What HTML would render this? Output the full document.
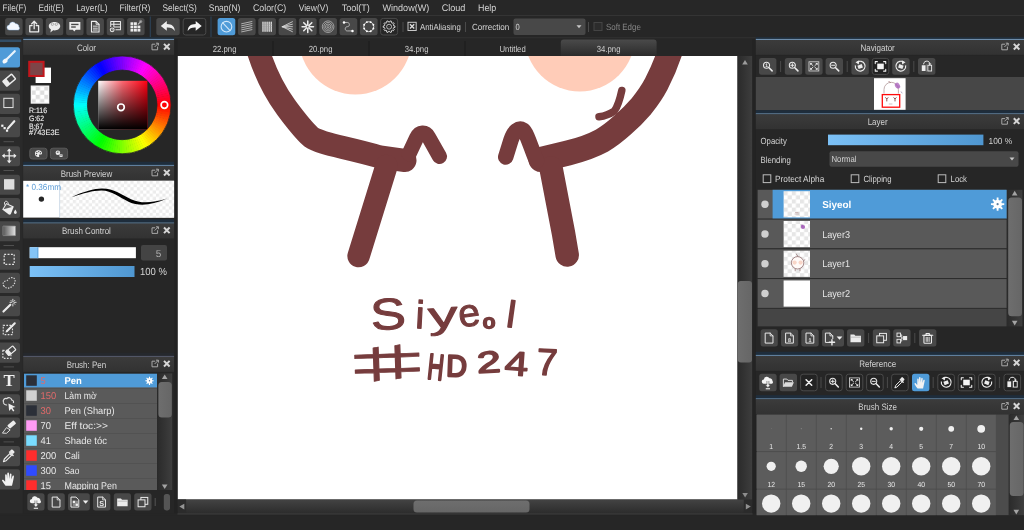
<!DOCTYPE html>
<html lang="en"><head><meta charset="utf-8"><title>MediBang Paint</title>
<style>
html,body{margin:0;padding:0;background:#262626;overflow:hidden}
svg{display:block;font-family:"Liberation Sans", sans-serif;text-rendering:geometricPrecision;will-change:transform;filter:blur(0.35px)}
</style></head><body>
<svg width="1024" height="530" viewBox="0 0 1024 530">
<defs>
<linearGradient id="gHdr" x1="0" y1="0" x2="0" y2="1"><stop offset="0" stop-color="#3b3b3b"/><stop offset="1" stop-color="#323232"/></linearGradient>
<linearGradient id="gBlue" x1="0" y1="0" x2="1" y2="0"><stop offset="0" stop-color="#7cc1f6"/><stop offset="1" stop-color="#4f97d1"/></linearGradient>
<linearGradient id="gTab" x1="0" y1="0" x2="0" y2="1"><stop offset="0" stop-color="#4a4a4a"/><stop offset="1" stop-color="#2b2b2b"/></linearGradient>
<linearGradient id="gTrackV" x1="0" y1="0" x2="1" y2="0"><stop offset="0" stop-color="#2a2a2a"/><stop offset="1" stop-color="#3e3e3e"/></linearGradient>
<linearGradient id="gThumbV" x1="0" y1="0" x2="1" y2="0"><stop offset="0" stop-color="#6e6e6e"/><stop offset="1" stop-color="#666666"/></linearGradient>
<linearGradient id="gTrackH" x1="0" y1="0" x2="0" y2="1"><stop offset="0" stop-color="#434343"/><stop offset="1" stop-color="#2c2c2c"/></linearGradient>
<linearGradient id="gThumbH" x1="0" y1="0" x2="0" y2="1"><stop offset="0" stop-color="#6e6e6e"/><stop offset="1" stop-color="#666666"/></linearGradient>
<linearGradient id="gSVw" x1="0" y1="0" x2="1" y2="0"><stop offset="0" stop-color="#ffffff"/><stop offset="0.5" stop-color="#ff6670"/><stop offset="1" stop-color="#ff0012"/></linearGradient>
<linearGradient id="gSVb" x1="0" y1="0" x2="0" y2="1"><stop offset="0" stop-color="#000" stop-opacity="0"/><stop offset="1" stop-color="#000" stop-opacity="1"/></linearGradient>
<linearGradient id="gGradTool" x1="0" y1="0" x2="1" y2="0"><stop offset="0" stop-color="#555"/><stop offset="1" stop-color="#e4e4e4"/></linearGradient>
<pattern id="chk" x="27.1" y="86.2" width="8.6" height="8.6" patternUnits="userSpaceOnUse"><rect width="8.6" height="8.6" fill="#fff"/><rect width="4.3" height="4.3" fill="#dedede"/><rect x="4.3" y="4.3" width="4.3" height="4.3" fill="#dedede"/></pattern>
<pattern id="chk2" x="60" y="180.800" width="6.400" height="6.400" patternUnits="userSpaceOnUse"><rect width="6.400" height="6.400" fill="#fff"/><rect width="3.200" height="3.200" fill="#ececec"/><rect x="3.200" y="3.200" width="3.200" height="3.200" fill="#ececec"/></pattern><pattern id="chk3" x="783.600" y="191.200" width="8.200" height="8.200" patternUnits="userSpaceOnUse"><rect width="8.200" height="8.200" fill="#fff"/><rect width="4.100" height="4.100" fill="#e6e6e6"/><rect x="4.100" y="4.100" width="4.100" height="4.100" fill="#e6e6e6"/></pattern>
<clipPath id="cvClip"><rect x="177.5" y="56" width="560" height="443.5"/></clipPath>
</defs>
<rect x="0.00" y="0.00" width="1024.00" height="530.00" fill="#272727"/>
<rect x="0.00" y="0.00" width="1024.00" height="15.20" fill="#272727"/>
<rect x="0.00" y="15.20" width="1024.00" height="0.90" fill="#383838"/>
<text transform="translate(2.50,11.20) scale(0.86,1)" font-size="9.6" fill="#d4d4d4" text-anchor="start" font-weight="normal" >File(F)</text>
<text transform="translate(38.60,11.20) scale(0.86,1)" font-size="9.6" fill="#d4d4d4" text-anchor="start" font-weight="normal" >Edit(E)</text>
<text transform="translate(76.20,11.20) scale(0.874,1)" font-size="9.6" fill="#d4d4d4" text-anchor="start" font-weight="normal" >Layer(L)</text>
<text transform="translate(119.50,11.20) scale(0.893,1)" font-size="9.6" fill="#d4d4d4" text-anchor="start" font-weight="normal" >Filter(R)</text>
<text transform="translate(162.50,11.20) scale(0.87,1)" font-size="9.6" fill="#d4d4d4" text-anchor="start" font-weight="normal" >Select(S)</text>
<text transform="translate(208.70,11.20) scale(0.888,1)" font-size="9.6" fill="#d4d4d4" text-anchor="start" font-weight="normal" >Snap(N)</text>
<text transform="translate(253.00,11.20) scale(0.916,1)" font-size="9.6" fill="#d4d4d4" text-anchor="start" font-weight="normal" >Color(C)</text>
<text transform="translate(298.70,11.20) scale(0.884,1)" font-size="9.6" fill="#d4d4d4" text-anchor="start" font-weight="normal" >View(V)</text>
<text transform="translate(341.70,11.20) scale(0.94,1)" font-size="9.6" fill="#d4d4d4" text-anchor="start" font-weight="normal" >Tool(T)</text>
<text transform="translate(382.50,11.20) scale(0.943,1)" font-size="9.6" fill="#d4d4d4" text-anchor="start" font-weight="normal" >Window(W)</text>
<text transform="translate(441.70,11.20) scale(0.944,1)" font-size="9.6" fill="#d4d4d4" text-anchor="start" font-weight="normal" >Cloud</text>
<text transform="translate(478.00,11.20) scale(0.926,1)" font-size="9.6" fill="#d4d4d4" text-anchor="start" font-weight="normal" >Help</text>
<rect x="0.00" y="16.10" width="1024.00" height="22.40" fill="#262626"/>
<rect x="0.00" y="37.40" width="1024.00" height="0.80" fill="#343434"/>
<rect x="5.10" y="18.10" width="17.50" height="17.20" fill="#484848" rx="2.5"/>
<g transform="translate(13.85,26.70) scale(0.92)"><path d="M-4.6 3.6a2.700 2.700 0 0 1 -0.300 -5.400a3.600 3.600 0 0 1 6.800 -1.300a3.100 3.100 0 0 1 3.600 3.300a2 2 0 0 1 -0.600 3.400z" fill="#f4f8ff" /><path d="M-4.6 3.6a2.700 2.700 0 0 1 -0.300 -5.400a3.600 3.600 0 0 1 6.800 -1.300a3.100 3.100 0 0 1 3.600 3.300a2 2 0 0 1 -0.600 3.400z" fill="none" stroke="#9cc4f0" stroke-width="0.9" stroke-opacity="0.55"/></g>
<rect x="25.43" y="18.10" width="17.50" height="17.20" fill="#484848" rx="2.5"/>
<g transform="translate(34.18,26.70) scale(0.92)"><path d="M-2.200 -1.200h-2.600v6.800h9.600v-6.800h-2.600" fill="none" stroke="#ececec" stroke-width="1.4" stroke-linecap="round" stroke-linejoin="round" /><path d="M0 2.200v-8m-2.800 2.800l2.800 -2.900l2.800 2.900" fill="none" stroke="#ececec" stroke-width="1.4" stroke-linecap="round" stroke-linejoin="round" /></g>
<rect x="45.76" y="18.10" width="17.50" height="17.20" fill="#484848" rx="2.5"/>
<g transform="translate(54.51,26.70) scale(0.92)"><path d="M0 -5c3.500 0 6.200 2 6.200 4.500s-2.700 4.500 -6.200 4.500c-0.500 0 -1 0 -1.500 -0.100l-3 2.300l0.600 -3.200c-1.400 -0.800 -2.300 -2.100 -2.300 -3.500c0 -2.500 2.700 -4.500 6.200 -4.500z" fill="#ececec" /><path d="M-3.200 -1.800a1.400 1.400 0 1 1 0.100 0.100M1 -1.800a1.400 1.400 0 1 1 0.100 0.100" fill="none" stroke="#8a8a8a" stroke-width="0.7" stroke-linecap="round" stroke-linejoin="round" /></g>
<rect x="66.09" y="18.10" width="17.50" height="17.20" fill="#484848" rx="2.5"/>
<g transform="translate(74.84,26.70) scale(0.92)"><path d="M-6 -5.200h12v8.400h-5l-1.600 1.900l-1.600 -1.900h-3.800z" fill="#ececec" /><rect x="-4" y="-3.2" width="8" height="1.5" fill="#484848"/><rect x="-4" y="-0.4" width="5" height="1.5" fill="#484848"/></g>
<rect x="86.42" y="18.10" width="17.50" height="17.20" fill="#484848" rx="2.5"/>
<g transform="translate(95.17,26.70) scale(0.92)"><path d="M-4 -5.800h5l3.200 3.200v8.400h-8.200z" fill="none" stroke="#ececec" stroke-width="1.2" stroke-linecap="round" stroke-linejoin="round" /><path d="M-2 -0.600h4.400M-2 1.600h4.400M-2 3.600h4.400" fill="none" stroke="#ececec" stroke-width="1" stroke-linecap="round" stroke-linejoin="round" /><path d="M1 -5.800v3.200h3.200" fill="none" stroke="#ececec" stroke-width="1" stroke-linecap="round" stroke-linejoin="round" /></g>
<rect x="106.75" y="18.10" width="17.50" height="17.20" fill="#484848" rx="2.5"/>
<g transform="translate(115.50,26.70) scale(0.92)"><path d="M-5.200 -5.600h10.600v9h-5M-5.200 -5.600v5.400M-5.200 -2.600h10.600M-1.400 0.400h6.800M-1.800 -5.600v5.400" fill="none" stroke="#ececec" stroke-width="1.1" stroke-linecap="round" stroke-linejoin="round" /><circle cx="-3.6" cy="3.4" r="2.1" fill="none" stroke="#ececec" stroke-width="1.1"/><circle cx="-3.6" cy="3.4" r="0.6" fill="#ececec"/></g>
<rect x="127.08" y="18.10" width="17.50" height="17.20" fill="#484848" rx="2.5"/>
<g transform="translate(135.83,26.70) scale(0.92)"><rect x="-5.8" y="-4.8" width="3.1" height="2.9" fill="#ececec"/><rect x="-2.0" y="-4.8" width="3.1" height="2.9" fill="#ececec"/><rect x="-5.8" y="-1.1999999999999997" width="3.1" height="2.9" fill="#ececec"/><rect x="-2.0" y="-1.1999999999999997" width="3.1" height="2.9" fill="#ececec"/><rect x="1.7999999999999998" y="-1.1999999999999997" width="3.1" height="2.9" fill="#ececec"/><rect x="-5.8" y="2.4000000000000004" width="3.1" height="2.9" fill="#ececec"/><rect x="-2.0" y="2.4000000000000004" width="3.1" height="2.9" fill="#ececec"/><rect x="1.7999999999999998" y="2.4000000000000004" width="3.1" height="2.9" fill="#ececec"/><path d="M2.600 -2.800l3 -3" fill="none" stroke="#bdbdbd" stroke-width="1.3" stroke-linecap="round" stroke-linejoin="round" /><circle cx="5.2" cy="-5.6" r="1.3" fill="none" stroke="#a8a8a8" stroke-width="0.8"/></g>
<line x1="150.30" y1="16.50" x2="150.30" y2="37.00" stroke="#2d4358" stroke-width="1.1"/>
<rect x="156.30" y="18.10" width="23.40" height="17.20" fill="#484848" rx="2.5"/>
<g transform="translate(168.00,26.70) scale(1.0)"><path d="M-7.200 -0.800l6 -4.800v2.800c5.400 0 8 2.800 8 7.200c-1.800 -2.800 -4.200 -3.800 -8 -3.600v3.200z" fill="#ececec" /></g>
<rect x="183.20" y="18.40" width="22.60" height="16.60" fill="#262626" rx="2.5" stroke="#4a4a4a" stroke-width="1"/>
<g transform="translate(194.50,26.70) scale(1.0)"><path d="M7.200 -0.800l-6 -4.800v2.800c-5.400 0 -8 2.800 -8 7.200c1.800 -2.800 4.200 -3.800 8 -3.600v3.200z" fill="#f4f4f4" /></g>
<line x1="211.00" y1="16.50" x2="211.00" y2="37.00" stroke="#2d4358" stroke-width="1.1"/>
<rect x="217.60" y="18.10" width="17.70" height="17.20" fill="#4f9bd8" rx="2.5"/>
<g transform="translate(226.45,26.70) scale(0.92)"><circle cx="0" cy="0" r="5.8" fill="none" stroke="#cfe6fa" stroke-width="1.2"/><path d="M-4 -4.200l8 8.400" fill="none" stroke="#cfe6fa" stroke-width="1.2" stroke-linecap="round" stroke-linejoin="round" /></g>
<rect x="237.93" y="18.10" width="17.70" height="17.20" fill="#484848" rx="2.5"/>
<g transform="translate(246.78,26.70) scale(0.92)"><path d="M-5.600 -3.2l11.200 -2.400" fill="none" stroke="#d6d6d6" stroke-width="0.8" stroke-linecap="round" stroke-linejoin="round" /><path d="M-5.600 -1.0l11.200 -2.400" fill="none" stroke="#d6d6d6" stroke-width="0.8" stroke-linecap="round" stroke-linejoin="round" /><path d="M-5.600 1.2l11.200 -2.400" fill="none" stroke="#d6d6d6" stroke-width="0.8" stroke-linecap="round" stroke-linejoin="round" /><path d="M-5.600 3.4l11.200 -2.400" fill="none" stroke="#d6d6d6" stroke-width="0.8" stroke-linecap="round" stroke-linejoin="round" /><path d="M-5.600 5.6l11.200 -2.400" fill="none" stroke="#d6d6d6" stroke-width="0.8" stroke-linecap="round" stroke-linejoin="round" /></g>
<rect x="258.26" y="18.10" width="17.70" height="17.20" fill="#484848" rx="2.5"/>
<g transform="translate(267.11,26.70) scale(0.92)"><path d="M-4.5 -5v10" fill="none" stroke="#e6e6e6" stroke-width="1.4" stroke-linecap="round" stroke-linejoin="round" /><path d="M-2.25 -5v10" fill="none" stroke="#e6e6e6" stroke-width="1.4" stroke-linecap="round" stroke-linejoin="round" /><path d="M0 -5v10" fill="none" stroke="#e6e6e6" stroke-width="1.4" stroke-linecap="round" stroke-linejoin="round" /><path d="M2.25 -5v10" fill="none" stroke="#e6e6e6" stroke-width="1.4" stroke-linecap="round" stroke-linejoin="round" /><path d="M4.5 -5v10" fill="none" stroke="#e6e6e6" stroke-width="1.4" stroke-linecap="round" stroke-linejoin="round" /><path d="M-5.200 -2.5h10.400" fill="none" stroke="#9a9a9a" stroke-width="0.5" stroke-linecap="round" stroke-linejoin="round" /><path d="M-5.200 0h10.400" fill="none" stroke="#9a9a9a" stroke-width="0.5" stroke-linecap="round" stroke-linejoin="round" /><path d="M-5.200 2.5h10.400" fill="none" stroke="#9a9a9a" stroke-width="0.5" stroke-linecap="round" stroke-linejoin="round" /></g>
<rect x="278.59" y="18.10" width="17.70" height="17.20" fill="#484848" rx="2.5"/>
<g transform="translate(287.44,26.70) scale(0.92)"><path d="M-5.600 0l11 -5.4" fill="none" stroke="#dcdcdc" stroke-width="0.9" stroke-linecap="round" stroke-linejoin="round" /><path d="M-5.600 0l11 -2.7" fill="none" stroke="#dcdcdc" stroke-width="0.9" stroke-linecap="round" stroke-linejoin="round" /><path d="M-5.600 0l11 0" fill="none" stroke="#dcdcdc" stroke-width="0.9" stroke-linecap="round" stroke-linejoin="round" /><path d="M-5.600 0l11 2.7" fill="none" stroke="#dcdcdc" stroke-width="0.9" stroke-linecap="round" stroke-linejoin="round" /><path d="M-5.600 0l11 5.4" fill="none" stroke="#dcdcdc" stroke-width="0.9" stroke-linecap="round" stroke-linejoin="round" /></g>
<rect x="298.92" y="18.10" width="17.70" height="17.20" fill="#484848" rx="2.5"/>
<g transform="translate(307.77,26.70) scale(0.92)"><path d="M1.70 0.00L6.20 0.00" fill="none" stroke="#ececec" stroke-width="1.65" stroke-linecap="round" stroke-linejoin="round" /><path d="M1.20 1.20L4.38 4.38" fill="none" stroke="#ececec" stroke-width="1.65" stroke-linecap="round" stroke-linejoin="round" /><path d="M0.00 1.70L0.00 6.20" fill="none" stroke="#ececec" stroke-width="1.65" stroke-linecap="round" stroke-linejoin="round" /><path d="M-1.20 1.20L-4.38 4.38" fill="none" stroke="#ececec" stroke-width="1.65" stroke-linecap="round" stroke-linejoin="round" /><path d="M-1.70 0.00L-6.20 0.00" fill="none" stroke="#ececec" stroke-width="1.65" stroke-linecap="round" stroke-linejoin="round" /><path d="M-1.20 -1.20L-4.38 -4.38" fill="none" stroke="#ececec" stroke-width="1.65" stroke-linecap="round" stroke-linejoin="round" /><path d="M-0.00 -1.70L-0.00 -6.20" fill="none" stroke="#ececec" stroke-width="1.65" stroke-linecap="round" stroke-linejoin="round" /><path d="M1.20 -1.20L4.38 -4.38" fill="none" stroke="#ececec" stroke-width="1.65" stroke-linecap="round" stroke-linejoin="round" /></g>
<rect x="319.25" y="18.10" width="17.70" height="17.20" fill="#484848" rx="2.5"/>
<g transform="translate(328.10,26.70) scale(0.92)"><circle cx="0" cy="0" r="1.2" fill="none" stroke="#cfcfcf" stroke-width="0.7"/><circle cx="0" cy="0" r="2.9" fill="none" stroke="#cfcfcf" stroke-width="0.7"/><circle cx="0" cy="0" r="4.6" fill="none" stroke="#cfcfcf" stroke-width="0.7"/><circle cx="0" cy="0" r="6.3" fill="none" stroke="#cfcfcf" stroke-width="0.7"/></g>
<rect x="339.58" y="18.10" width="17.70" height="17.20" fill="#484848" rx="2.5"/>
<g transform="translate(348.43,26.70) scale(0.92)"><path d="M-4.600 -4.600h3.400c3 0 3 4.600 0 4.600c-3 0 -3 4.600 0 4.600h5" fill="none" stroke="#c4c4c4" stroke-width="0.95" stroke-linecap="round" stroke-linejoin="round" /><circle cx="-4.8" cy="-4.6" r="1.35" fill="#fff"/><circle cx="4.4" cy="4.6" r="1.35" fill="#fff"/></g>
<rect x="359.91" y="18.10" width="17.70" height="17.20" fill="#484848" rx="2.5"/>
<g transform="translate(368.76,26.70) scale(0.92)"><circle cx="0" cy="0" r="5.4" fill="none" stroke="#d8d8d8" stroke-width="1.05"/><circle cx="4.99" cy="2.05" r="1.05" fill="#ffffff"/><circle cx="2.08" cy="4.98" r="1.05" fill="#ffffff"/><circle cx="-2.05" cy="4.99" r="1.05" fill="#ffffff"/><circle cx="-4.98" cy="2.08" r="1.05" fill="#ffffff"/><circle cx="-4.99" cy="-2.05" r="1.05" fill="#ffffff"/><circle cx="-2.08" cy="-4.98" r="1.05" fill="#ffffff"/><circle cx="2.05" cy="-4.99" r="1.05" fill="#ffffff"/><circle cx="4.98" cy="-2.08" r="1.05" fill="#ffffff"/></g>
<rect x="380.64" y="18.40" width="17.00" height="16.60" fill="#262626" rx="2.5" stroke="#4a4a4a" stroke-width="1"/>
<g transform="translate(389.09,26.70) scale(0.88)"><polygon points="5.19,-1.05 6.65,-0.80 6.65,0.80 5.19,1.05 4.82,2.20 5.85,3.26 4.91,4.56 3.58,3.91 2.61,4.61 2.82,6.08 1.29,6.57 0.60,5.27 -0.60,5.27 -1.29,6.57 -2.82,6.08 -2.61,4.61 -3.58,3.91 -4.91,4.56 -5.85,3.26 -4.82,2.20 -5.19,1.05 -6.65,0.80 -6.65,-0.80 -5.19,-1.05 -4.82,-2.20 -5.85,-3.26 -4.91,-4.56 -3.58,-3.91 -2.61,-4.61 -2.82,-6.08 -1.29,-6.57 -0.60,-5.27 0.60,-5.27 1.29,-6.57 2.82,-6.08 2.61,-4.61 3.58,-3.91 4.91,-4.56 5.85,-3.26 4.82,-2.20" fill="none" stroke="#dcdcdc" stroke-width="1.1" stroke-linejoin="round"/><circle cx="0" cy="0" r="2.8" fill="none" stroke="#d0d0d0" stroke-width="1"/><circle cx="0" cy="0" r="0.9" fill="#555"/></g>
<line x1="403.00" y1="22.00" x2="403.00" y2="32.00" stroke="#4a4a4a" stroke-width="1"/>
<rect x="408.00" y="22.30" width="8.20" height="8.20" fill="#2a2a2a" stroke="#c8c8c8" stroke-width="1"/>
<path d="M410 24.3l4.2 4.2m0-4.2l-4.2 4.2" stroke="#e0e0e0" stroke-width="1.3" fill="none"/>
<text transform="translate(420.00,30.00) scale(0.886,1)" font-size="8.8" fill="#d4d4d4" text-anchor="start" font-weight="normal" >AntiAliasing</text>
<line x1="465.50" y1="22.00" x2="465.50" y2="32.00" stroke="#4a4a4a" stroke-width="1"/>
<text transform="translate(472.00,30.00) scale(0.915,1)" font-size="8.8" fill="#d4d4d4" text-anchor="start" font-weight="normal" >Correction</text>
<rect x="513.50" y="18.50" width="72.00" height="16.50" fill="#484848" rx="2"/>
<text transform="translate(515.50,30.00) scale(0.86,1)" font-size="8.8" fill="#d4d4d4" text-anchor="start" font-weight="normal" >0</text>
<path d="M576.5 25.3h5l-2.5 3z" fill="#c8c8c8"/>
<line x1="588.50" y1="22.00" x2="588.50" y2="32.00" stroke="#4a4a4a" stroke-width="1"/>
<rect x="594.00" y="22.50" width="8.00" height="8.00" fill="#2c2c2c" stroke="#444" stroke-width="1"/>
<text transform="translate(606.00,30.00) scale(0.88,1)" font-size="9" fill="#858585" text-anchor="start" font-weight="normal" >Soft Edge</text>
<rect x="0.00" y="38.50" width="22.50" height="476.00" fill="#2a2a2a"/>
<rect x="0.00" y="39.50" width="21.20" height="2.50" fill="#324d66"/>
<rect x="-2.00" y="47.22" width="22.00" height="20.20" fill="#4f9bd8" rx="2.5"/>
<g transform="translate(9.20,56.92) scale(0.96)"><path d="M-2.400 2.200l8.200 -8.200" fill="none" stroke="#e8f3fc" stroke-width="2.3" stroke-linecap="round" stroke-linejoin="round" /><ellipse cx="-4.300" cy="4.300" rx="2.900" ry="2.200" transform="rotate(-35 -4.300 4.300)" fill="#f4f8fc"/></g>
<rect x="-2.00" y="70.46" width="22.00" height="20.20" fill="#484848" rx="2.5"/>
<g transform="translate(9.20,80.16) scale(0.96)"><g transform="rotate(-40)"><rect x="-6" y="-3.3" width="12" height="6.6" fill="none" rx="0.6" stroke="#ececec" stroke-width="1.5"/><rect x="-6" y="-3.3" width="4.6" height="6.6" fill="#ececec"/></g></g>
<rect x="-2.00" y="93.70" width="22.00" height="20.20" fill="#484848" rx="2.5"/>
<g transform="translate(9.20,103.40) scale(0.96)"><rect x="-5.6" y="-5.3" width="9.6" height="9.6" fill="none" stroke="#dcdcdc" stroke-width="1.1"/></g>
<rect x="-2.00" y="116.94" width="22.00" height="20.20" fill="#484848" rx="2.5"/>
<g transform="translate(9.20,126.64) scale(0.96)"><path d="M-1.300 1.800l6.600 -7.400" fill="none" stroke="#ececec" stroke-width="2.3" stroke-linecap="round" stroke-linejoin="round" /><rect x="-8.3" y="-2.1" width="2.3" height="2.3" fill="#f4f4f4"/><rect x="-5.9" y="0.4" width="2.3" height="2.3" fill="#f4f4f4"/><rect x="-3.4" y="3" width="2.3" height="2.3" fill="#f4f4f4"/></g>
<rect x="-2.00" y="146.17" width="22.00" height="20.20" fill="#484848" rx="2.5"/>
<g transform="translate(9.20,155.87) scale(0.96)"><path d="M0 -6v12M-6 0h12" fill="none" stroke="#ececec" stroke-width="1.3" stroke-linecap="round" stroke-linejoin="round" /><path d="M0 -7.600l2.500 2.900h-5zM0 7.600l2.500 -2.900h-5zM-7.600 0l2.900 -2.500v5zM7.600 0l-2.900 -2.500v5z" fill="#ececec" /></g>
<rect x="-2.00" y="174.66" width="22.00" height="20.20" fill="#484848" rx="2.5"/>
<g transform="translate(9.20,184.36) scale(0.96)"><rect x="-5.4" y="-5.4" width="10.8" height="10.8" fill="#dedede"/></g>
<rect x="-2.00" y="197.89" width="22.00" height="20.20" fill="#484848" rx="2.5"/>
<g transform="translate(9.20,207.59) scale(0.96)"><g transform="translate(-0.800,0) rotate(-14) scale(1.06)"><path d="M-6.400 0.400l5.400 -5.400l6.400 5.200l-4.400 6.200c-0.500 0.700 -1.500 0.900 -2.300 0.300z" fill="#ececec" /><path d="M-5 0.400l4 -4l4.600 3.800z" fill="#5a5a5a" /><path d="M-2.600 -2.800c-1.200 -3 1.200 -5 2.800 -3.200c0.800 0.900 0.800 2 0.600 3" fill="none" stroke="#dcdcdc" stroke-width="0.9" stroke-linecap="round" stroke-linejoin="round" /></g><path d="M6.400 2c0.900 1.400 1.500 2.400 1.500 3.200a1.500 1.500 0 0 1 -3 0c0 -0.800 0.600 -1.800 1.500 -3.200z" fill="#ececec" /></g>
<rect x="-2.00" y="221.13" width="22.00" height="20.20" fill="#484848" rx="2.5"/>
<g transform="translate(9.20,230.83) scale(0.96)"><rect x="-6.6" y="-5" width="13.2" height="10" fill="url(#gGradTool)" rx="0.5" stroke="#8a8a8a" stroke-width="0.7"/></g>
<rect x="-2.00" y="249.62" width="22.00" height="20.20" fill="#484848" rx="2.5"/>
<g transform="translate(9.20,259.32) scale(0.96)"><rect x="-5.2" y="-5.2" width="10.4" height="10.4" fill="none" stroke="#e0e0e0" stroke-width="1.3" stroke-dasharray="2 1.500"/></g>
<rect x="-2.00" y="272.85" width="22.00" height="20.20" fill="#484848" rx="2.5"/>
<g transform="translate(9.20,282.55) scale(0.96)"><path d="M-5.400 3.800c-2.200 -2.600 -0.400 -5.200 2.200 -5.600c2 -0.300 2.400 -2.600 4.800 -3.200c3.200 -0.800 5.200 1.800 4.400 4.600c-1 3.800 -4.600 6.400 -8 6.200c-1.600 -0.100 -2.600 -0.900 -3.400 -2z" fill="none" stroke="#dcdcdc" stroke-width="1.200" stroke-dasharray="1.400 1.300"/></g>
<rect x="-2.00" y="296.09" width="22.00" height="20.20" fill="#484848" rx="2.5"/>
<g transform="translate(9.20,305.79) scale(0.96)"><path d="M-6 6l7.200 -7.200" fill="none" stroke="#ececec" stroke-width="2.2" stroke-linecap="round" stroke-linejoin="round" /><path d="M3.800 -6.800v2.200M3.800 -1.800v2M0.800 -3.600h2M5 -3.600h2.200M1.800 -5.600l1 1M5.800 -5.600l-1 1M5.800 -1.600l-1 -1" fill="none" stroke="#f0f0f0" stroke-width="0.9" stroke-linecap="round" stroke-linejoin="round" /></g>
<rect x="-2.00" y="319.33" width="22.00" height="20.20" fill="#484848" rx="2.5"/>
<g transform="translate(9.20,329.03) scale(0.96)"><rect x="-6.2" y="-3.8" width="9.6" height="9.6" fill="none" stroke="#dcdcdc" stroke-width="1.2" stroke-dasharray="1.800 1.400"/><path d="M-2.200 2l8 -8" fill="none" stroke="#ececec" stroke-width="2.2" stroke-linecap="round" stroke-linejoin="round" /><path d="M-3.800 3.600l0.600 -2.200l1.600 1.600z" fill="#ececec" /></g>
<rect x="-2.00" y="342.57" width="22.00" height="20.20" fill="#484848" rx="2.5"/>
<g transform="translate(9.20,352.27) scale(0.96)"><rect x="-6.6" y="-2" width="8.4" height="8.4" fill="none" stroke="#dcdcdc" stroke-width="1.2" stroke-dasharray="1.800 1.400"/><g transform="translate(1.600,-1.600) rotate(-40) scale(0.8)"><rect x="-6" y="-3.3" width="12" height="6.6" fill="#484848" rx="0.6" stroke="#ececec" stroke-width="1.5"/><rect x="-6" y="-3.3" width="4.6" height="6.6" fill="#ececec"/></g></g>
<rect x="-2.00" y="371.05" width="22.00" height="20.20" fill="#484848" rx="2.5"/>
<g transform="translate(9.20,380.75) scale(0.96)"><text x="0" y="5.800" font-family="&quot;Liberation Serif&quot;, serif" font-weight="bold" font-size="17.500" text-anchor="middle" fill="#f0f0f0">T</text></g>
<rect x="-2.00" y="394.29" width="22.00" height="20.20" fill="#484848" rx="2.5"/>
<g transform="translate(9.20,403.99) scale(0.96)"><path d="M-6 -1.800c-1 -2.600 1.400 -4.600 3.600 -3.800c1.400 -1.600 4.600 -1.200 5 1.400c1.800 0.200 2.400 2 1.600 3.200" fill="none" stroke="#e0e0e0" stroke-width="1.200"/><path d="M-6 -1.800c0.200 2 1.800 3 3.800 2.800" fill="none" stroke="#e0e0e0" stroke-width="1.200"/><path d="M-0.800 -0.400l7.400 3.600l-3.200 0.800l2 3l-1.300 0.900l-2 -3l-2.200 2.300z" fill="#ececec" /></g>
<rect x="-2.00" y="417.53" width="22.00" height="20.20" fill="#484848" rx="2.5"/>
<g transform="translate(9.20,427.23) scale(0.96)"><path d="M-7 5.600l3.800 -5.200l4.600 2.600l-3.600 3.400z" fill="none" /><path d="M-6.800 5.800l4 -5.400l3.800 2.400l-3.400 3.200z" fill="none" stroke="#e0e0e0" stroke-width="1" stroke-linecap="round" stroke-linejoin="round" /><g transform="rotate(-40)"><rect x="-0.6" y="-2.7" width="8.8" height="4.4" fill="#ececec" rx="1"/></g></g>
<rect x="-2.00" y="446.01" width="22.00" height="20.20" fill="#484848" rx="2.5"/>
<g transform="translate(9.20,455.71) scale(0.96)"><path d="M-6 6.200l1 -2.800l5.600 -5.600l1.800 1.800l-5.600 5.600z" fill="none" stroke="#ececec" stroke-width="1.2" stroke-linecap="round" stroke-linejoin="round" /><path d="M0.400 -3.800l3.600 3.600" fill="none" stroke="#ececec" stroke-width="1.6" stroke-linecap="round" stroke-linejoin="round" /><g transform="rotate(-45 3.600 -3.600)"><rect x="2" y="-6.6" width="3.4" height="4.6" fill="#ececec" rx="1.2"/></g></g>
<rect x="-2.00" y="469.25" width="22.00" height="20.20" fill="#484848" rx="2.5"/>
<g transform="translate(9.20,478.95) scale(0.96)"><path d="M-3.800 7.200c-1.400 -1.600 -2.600 -3.400 -3.600 -5.200c-0.500 -0.900 0.700 -1.800 1.500 -0.900l1.700 1.900v-7.200c0 -1.100 1.600 -1.100 1.700 0l0.300 4.200l0.200 -5.700c0 -1.200 1.700 -1.200 1.800 0l0.200 5.700l0.700 -5c0.100 -1.100 1.700 -1 1.700 0.200l-0.300 5.400l1.200 -3.500c0.400 -1 1.800 -0.600 1.600 0.500c-0.500 3 -1 5.400 -2 9.600z" fill="#f2f2f2" /></g>
<line x1="3.50" y1="141.70" x2="14.00" y2="141.70" stroke="#505050" stroke-width="1"/>
<line x1="3.50" y1="170.50" x2="14.00" y2="170.50" stroke="#505050" stroke-width="1"/>
<line x1="3.50" y1="245.50" x2="14.00" y2="245.50" stroke="#505050" stroke-width="1"/>
<line x1="3.50" y1="366.90" x2="14.00" y2="366.90" stroke="#505050" stroke-width="1"/>
<line x1="3.50" y1="441.90" x2="14.00" y2="441.90" stroke="#505050" stroke-width="1"/>
<rect x="23.20" y="39.00" width="151.00" height="475.00" fill="#262626"/>
<rect x="23.20" y="37.20" width="151.00" height="1.80" fill="#1e2d3c"/>
<rect x="23.20" y="38.90" width="151.00" height="1.05" fill="#7393b2"/>
<rect x="23.20" y="40.00" width="151.00" height="14.80" fill="url(#gHdr)"/>
<text transform="translate(86.45,50.80) scale(0.86,1)" font-size="9.3" fill="#d2d2d2" text-anchor="middle" font-weight="normal" >Color</text>
<path d="M155.2 44.2h-3.200v5.600h5.600v-3.200" stroke="#a8a8a8" stroke-width="1" fill="none"/>
<path d="M154.6 47.0l3.800-3.800m-2.400 0h2.400v2.400" stroke="#a8a8a8" stroke-width="1" fill="none"/>
<path d="M164.0 43.9l5.600 5.600m0-5.600l-5.600 5.600" stroke="#d6d6d6" stroke-width="2" fill="none"/>
<rect x="35.60" y="67.60" width="15.40" height="15.40" fill="#ffffff"/>
<rect x="28.20" y="60.80" width="16.40" height="16.20" fill="#c2161c"/>
<rect x="30.20" y="62.80" width="12.40" height="12.20" fill="#7d4548"/>
<rect x="31.40" y="86.20" width="17.20" height="16.80" fill="url(#chk)"/>
<rect x="31.40" y="86.20" width="17.20" height="16.80" fill="none" stroke="#f4f4f4" stroke-width="1.4"/>
<text transform="translate(29.00,112.80) scale(0.89,1)" font-size="7.8" fill="#eeeeee" text-anchor="start" font-weight="normal" stroke="#eeeeee" stroke-width="0.12">R:116</text>
<text transform="translate(29.00,121.00) scale(0.89,1)" font-size="7.8" fill="#eeeeee" text-anchor="start" font-weight="normal" stroke="#eeeeee" stroke-width="0.12">G:62</text>
<text transform="translate(29.00,129.00) scale(0.89,1)" font-size="7.8" fill="#eeeeee" text-anchor="start" font-weight="normal" stroke="#eeeeee" stroke-width="0.12">B:67</text>
<text transform="translate(29.00,134.80) scale(0.95,1)" font-size="7.8" fill="#eeeeee" text-anchor="start" font-weight="normal" stroke="#eeeeee" stroke-width="0.12">#743E3E</text>
<polygon points="171.10,104.90 171.00,108.10 156.93,107.18 157.00,104.90" fill="hsl(1.5,100%,50%)"/>
<polygon points="171.03,107.46 170.76,110.65 156.76,108.99 156.95,106.72" fill="hsl(4.5,100%,50%)"/>
<polygon points="170.83,110.01 170.39,113.18 156.50,110.79 156.81,108.54" fill="hsl(7.5,100%,50%)"/>
<polygon points="170.50,112.55 169.89,115.69 156.14,112.58 156.57,110.34" fill="hsl(10.5,100%,50%)"/>
<polygon points="170.03,115.07 169.26,118.17 155.69,114.35 156.24,112.14" fill="hsl(13.5,100%,50%)"/>
<polygon points="169.43,117.56 168.50,120.62 155.15,116.09 155.81,113.91" fill="hsl(16.5,100%,50%)"/>
<polygon points="168.71,120.01 167.62,123.02 154.52,117.80 155.30,115.65" fill="hsl(19.5,100%,50%)"/>
<polygon points="167.85,122.42 166.61,125.37 153.80,119.47 154.69,117.37" fill="hsl(22.5,100%,50%)"/>
<polygon points="166.87,124.79 165.48,127.67 153.00,121.10 153.99,119.05" fill="hsl(25.5,100%,50%)"/>
<polygon points="165.77,127.10 164.22,129.90 152.11,122.69 153.21,120.70" fill="hsl(28.5,100%,50%)"/>
<polygon points="164.55,129.35 162.86,132.07 151.14,124.23 152.34,122.30" fill="hsl(31.5,100%,50%)"/>
<polygon points="163.21,131.53 161.38,134.16 150.08,125.72 151.39,123.85" fill="hsl(34.5,100%,50%)"/>
<polygon points="161.76,133.64 159.80,136.17 148.96,127.15 150.35,125.35" fill="hsl(37.5,100%,50%)"/>
<polygon points="160.20,135.67 158.11,138.09 147.75,128.52 149.24,126.80" fill="hsl(40.5,100%,50%)"/>
<polygon points="158.54,137.62 156.32,139.93 146.48,129.83 148.06,128.19" fill="hsl(43.5,100%,50%)"/>
<polygon points="156.78,139.48 154.44,141.66 145.15,131.06 146.81,129.51" fill="hsl(46.5,100%,50%)"/>
<polygon points="154.92,141.24 152.47,143.30 143.74,132.23 145.49,130.76" fill="hsl(49.5,100%,50%)"/>
<polygon points="152.97,142.90 150.42,144.83 142.28,133.32 144.10,131.94" fill="hsl(52.5,100%,50%)"/>
<polygon points="150.94,144.46 148.29,146.26 140.77,134.33 142.65,133.05" fill="hsl(55.5,100%,50%)"/>
<polygon points="148.83,145.91 146.09,147.57 139.20,135.26 141.15,134.09" fill="hsl(58.5,100%,50%)"/>
<polygon points="146.65,147.25 143.83,148.76 137.59,136.11 139.60,135.04" fill="hsl(61.5,100%,50%)"/>
<polygon points="144.40,148.47 141.50,149.83 135.94,136.87 138.00,135.91" fill="hsl(64.5,100%,50%)"/>
<polygon points="142.09,149.57 139.13,150.78 134.24,137.55 136.35,136.69" fill="hsl(67.5,100%,50%)"/>
<polygon points="139.72,150.55 136.70,151.60 132.52,138.13 134.67,137.39" fill="hsl(70.5,100%,50%)"/>
<polygon points="137.31,151.41 134.24,152.30 130.77,138.63 132.95,138.00" fill="hsl(73.5,100%,50%)"/>
<polygon points="134.86,152.13 131.74,152.86 128.99,139.03 131.21,138.51" fill="hsl(76.5,100%,50%)"/>
<polygon points="132.37,152.73 129.22,153.29 127.19,139.34 129.44,138.94" fill="hsl(79.5,100%,50%)"/>
<polygon points="129.85,153.20 126.67,153.59 125.38,139.55 127.64,139.27" fill="hsl(82.5,100%,50%)"/>
<polygon points="127.31,153.53 124.12,153.76 123.57,139.67 125.84,139.51" fill="hsl(85.5,100%,50%)"/>
<polygon points="124.76,153.73 121.56,153.80 121.74,139.70 124.02,139.65" fill="hsl(88.5,100%,50%)"/>
<polygon points="122.20,153.80 119.00,153.70 119.92,139.63 122.20,139.70" fill="hsl(91.5,100%,50%)"/>
<polygon points="119.64,153.73 116.45,153.46 118.11,139.46 120.38,139.65" fill="hsl(94.5,100%,50%)"/>
<polygon points="117.09,153.53 113.92,153.09 116.31,139.20 118.56,139.51" fill="hsl(97.5,100%,50%)"/>
<polygon points="114.55,153.20 111.41,152.59 114.52,138.84 116.76,139.27" fill="hsl(100.5,100%,50%)"/>
<polygon points="112.03,152.73 108.93,151.96 112.75,138.39 114.96,138.94" fill="hsl(103.5,100%,50%)"/>
<polygon points="109.54,152.13 106.48,151.20 111.01,137.85 113.19,138.51" fill="hsl(106.5,100%,50%)"/>
<polygon points="107.09,151.41 104.08,150.32 109.30,137.22 111.45,138.00" fill="hsl(109.5,100%,50%)"/>
<polygon points="104.68,150.55 101.73,149.31 107.63,136.50 109.73,137.39" fill="hsl(112.5,100%,50%)"/>
<polygon points="102.31,149.57 99.43,148.18 106.00,135.70 108.05,136.69" fill="hsl(115.5,100%,50%)"/>
<polygon points="100.00,148.47 97.20,146.92 104.41,134.81 106.40,135.91" fill="hsl(118.5,100%,50%)"/>
<polygon points="97.75,147.25 95.03,145.56 102.87,133.84 104.80,135.04" fill="hsl(121.5,100%,50%)"/>
<polygon points="95.57,145.91 92.94,144.08 101.38,132.78 103.25,134.09" fill="hsl(124.5,100%,50%)"/>
<polygon points="93.46,144.46 90.93,142.50 99.95,131.66 101.75,133.05" fill="hsl(127.5,100%,50%)"/>
<polygon points="91.43,142.90 89.01,140.81 98.58,130.45 100.30,131.94" fill="hsl(130.5,100%,50%)"/>
<polygon points="89.48,141.24 87.17,139.02 97.27,129.18 98.91,130.76" fill="hsl(133.5,100%,50%)"/>
<polygon points="87.62,139.48 85.44,137.14 96.04,127.85 97.59,129.51" fill="hsl(136.5,100%,50%)"/>
<polygon points="85.86,137.62 83.80,135.17 94.87,126.44 96.34,128.19" fill="hsl(139.5,100%,50%)"/>
<polygon points="84.20,135.67 82.27,133.12 93.78,124.98 95.16,126.80" fill="hsl(142.5,100%,50%)"/>
<polygon points="82.64,133.64 80.84,130.99 92.77,123.47 94.05,125.35" fill="hsl(145.5,100%,50%)"/>
<polygon points="81.19,131.53 79.53,128.79 91.84,121.90 93.01,123.85" fill="hsl(148.5,100%,50%)"/>
<polygon points="79.85,129.35 78.34,126.53 90.99,120.29 92.06,122.30" fill="hsl(151.5,100%,50%)"/>
<polygon points="78.63,127.10 77.27,124.20 90.23,118.64 91.19,120.70" fill="hsl(154.5,100%,50%)"/>
<polygon points="77.53,124.79 76.32,121.83 89.55,116.94 90.41,119.05" fill="hsl(157.5,100%,50%)"/>
<polygon points="76.55,122.42 75.50,119.40 88.97,115.22 89.71,117.37" fill="hsl(160.5,100%,50%)"/>
<polygon points="75.69,120.01 74.80,116.94 88.47,113.47 89.10,115.65" fill="hsl(163.5,100%,50%)"/>
<polygon points="74.97,117.56 74.24,114.44 88.07,111.69 88.59,113.91" fill="hsl(166.5,100%,50%)"/>
<polygon points="74.37,115.07 73.81,111.92 87.76,109.89 88.16,112.14" fill="hsl(169.5,100%,50%)"/>
<polygon points="73.90,112.55 73.51,109.37 87.55,108.08 87.83,110.34" fill="hsl(172.5,100%,50%)"/>
<polygon points="73.57,110.01 73.34,106.82 87.43,106.27 87.59,108.54" fill="hsl(175.5,100%,50%)"/>
<polygon points="73.37,107.46 73.30,104.26 87.40,104.44 87.45,106.72" fill="hsl(178.5,100%,50%)"/>
<polygon points="73.30,104.90 73.40,101.70 87.47,102.62 87.40,104.90" fill="hsl(181.5,100%,50%)"/>
<polygon points="73.37,102.34 73.64,99.15 87.64,100.81 87.45,103.08" fill="hsl(184.5,100%,50%)"/>
<polygon points="73.57,99.79 74.01,96.62 87.90,99.01 87.59,101.26" fill="hsl(187.5,100%,50%)"/>
<polygon points="73.90,97.25 74.51,94.11 88.26,97.22 87.83,99.46" fill="hsl(190.5,100%,50%)"/>
<polygon points="74.37,94.73 75.14,91.63 88.71,95.45 88.16,97.66" fill="hsl(193.5,100%,50%)"/>
<polygon points="74.97,92.24 75.90,89.18 89.25,93.71 88.59,95.89" fill="hsl(196.5,100%,50%)"/>
<polygon points="75.69,89.79 76.78,86.78 89.88,92.00 89.10,94.15" fill="hsl(199.5,100%,50%)"/>
<polygon points="76.55,87.38 77.79,84.43 90.60,90.33 89.71,92.43" fill="hsl(202.5,100%,50%)"/>
<polygon points="77.53,85.01 78.92,82.13 91.40,88.70 90.41,90.75" fill="hsl(205.5,100%,50%)"/>
<polygon points="78.63,82.70 80.18,79.90 92.29,87.11 91.19,89.10" fill="hsl(208.5,100%,50%)"/>
<polygon points="79.85,80.45 81.54,77.73 93.26,85.57 92.06,87.50" fill="hsl(211.5,100%,50%)"/>
<polygon points="81.19,78.27 83.02,75.64 94.32,84.08 93.01,85.95" fill="hsl(214.5,100%,50%)"/>
<polygon points="82.64,76.16 84.60,73.63 95.44,82.65 94.05,84.45" fill="hsl(217.5,100%,50%)"/>
<polygon points="84.20,74.13 86.29,71.71 96.65,81.28 95.16,83.00" fill="hsl(220.5,100%,50%)"/>
<polygon points="85.86,72.18 88.08,69.87 97.92,79.97 96.34,81.61" fill="hsl(223.5,100%,50%)"/>
<polygon points="87.62,70.32 89.96,68.14 99.25,78.74 97.59,80.29" fill="hsl(226.5,100%,50%)"/>
<polygon points="89.48,68.56 91.93,66.50 100.66,77.57 98.91,79.04" fill="hsl(229.5,100%,50%)"/>
<polygon points="91.43,66.90 93.98,64.97 102.12,76.48 100.30,77.86" fill="hsl(232.5,100%,50%)"/>
<polygon points="93.46,65.34 96.11,63.54 103.63,75.47 101.75,76.75" fill="hsl(235.5,100%,50%)"/>
<polygon points="95.57,63.89 98.31,62.23 105.20,74.54 103.25,75.71" fill="hsl(238.5,100%,50%)"/>
<polygon points="97.75,62.55 100.57,61.04 106.81,73.69 104.80,74.76" fill="hsl(241.5,100%,50%)"/>
<polygon points="100.00,61.33 102.90,59.97 108.46,72.93 106.40,73.89" fill="hsl(244.5,100%,50%)"/>
<polygon points="102.31,60.23 105.27,59.02 110.16,72.25 108.05,73.11" fill="hsl(247.5,100%,50%)"/>
<polygon points="104.68,59.25 107.70,58.20 111.88,71.67 109.73,72.41" fill="hsl(250.5,100%,50%)"/>
<polygon points="107.09,58.39 110.16,57.50 113.63,71.17 111.45,71.80" fill="hsl(253.5,100%,50%)"/>
<polygon points="109.54,57.67 112.66,56.94 115.41,70.77 113.19,71.29" fill="hsl(256.5,100%,50%)"/>
<polygon points="112.03,57.07 115.18,56.51 117.21,70.46 114.96,70.86" fill="hsl(259.5,100%,50%)"/>
<polygon points="114.55,56.60 117.73,56.21 119.02,70.25 116.76,70.53" fill="hsl(262.5,100%,50%)"/>
<polygon points="117.09,56.27 120.28,56.04 120.83,70.13 118.56,70.29" fill="hsl(265.5,100%,50%)"/>
<polygon points="119.64,56.07 122.84,56.00 122.66,70.10 120.38,70.15" fill="hsl(268.5,100%,50%)"/>
<polygon points="122.20,56.00 125.40,56.10 124.48,70.17 122.20,70.10" fill="hsl(271.5,100%,50%)"/>
<polygon points="124.76,56.07 127.95,56.34 126.29,70.34 124.02,70.15" fill="hsl(274.5,100%,50%)"/>
<polygon points="127.31,56.27 130.48,56.71 128.09,70.60 125.84,70.29" fill="hsl(277.5,100%,50%)"/>
<polygon points="129.85,56.60 132.99,57.21 129.88,70.96 127.64,70.53" fill="hsl(280.5,100%,50%)"/>
<polygon points="132.37,57.07 135.47,57.84 131.65,71.41 129.44,70.86" fill="hsl(283.5,100%,50%)"/>
<polygon points="134.86,57.67 137.92,58.60 133.39,71.95 131.21,71.29" fill="hsl(286.5,100%,50%)"/>
<polygon points="137.31,58.39 140.32,59.48 135.10,72.58 132.95,71.80" fill="hsl(289.5,100%,50%)"/>
<polygon points="139.72,59.25 142.67,60.49 136.77,73.30 134.67,72.41" fill="hsl(292.5,100%,50%)"/>
<polygon points="142.09,60.23 144.97,61.62 138.40,74.10 136.35,73.11" fill="hsl(295.5,100%,50%)"/>
<polygon points="144.40,61.33 147.20,62.88 139.99,74.99 138.00,73.89" fill="hsl(298.5,100%,50%)"/>
<polygon points="146.65,62.55 149.37,64.24 141.53,75.96 139.60,74.76" fill="hsl(301.5,100%,50%)"/>
<polygon points="148.83,63.89 151.46,65.72 143.02,77.02 141.15,75.71" fill="hsl(304.5,100%,50%)"/>
<polygon points="150.94,65.34 153.47,67.30 144.45,78.14 142.65,76.75" fill="hsl(307.5,100%,50%)"/>
<polygon points="152.97,66.90 155.39,68.99 145.82,79.35 144.10,77.86" fill="hsl(310.5,100%,50%)"/>
<polygon points="154.92,68.56 157.23,70.78 147.13,80.62 145.49,79.04" fill="hsl(313.5,100%,50%)"/>
<polygon points="156.78,70.32 158.96,72.66 148.36,81.95 146.81,80.29" fill="hsl(316.5,100%,50%)"/>
<polygon points="158.54,72.18 160.60,74.63 149.53,83.36 148.06,81.61" fill="hsl(319.5,100%,50%)"/>
<polygon points="160.20,74.13 162.13,76.68 150.62,84.82 149.24,83.00" fill="hsl(322.5,100%,50%)"/>
<polygon points="161.76,76.16 163.56,78.81 151.63,86.33 150.35,84.45" fill="hsl(325.5,100%,50%)"/>
<polygon points="163.21,78.27 164.87,81.01 152.56,87.90 151.39,85.95" fill="hsl(328.5,100%,50%)"/>
<polygon points="164.55,80.45 166.06,83.27 153.41,89.51 152.34,87.50" fill="hsl(331.5,100%,50%)"/>
<polygon points="165.77,82.70 167.13,85.60 154.17,91.16 153.21,89.10" fill="hsl(334.5,100%,50%)"/>
<polygon points="166.87,85.01 168.08,87.97 154.85,92.86 153.99,90.75" fill="hsl(337.5,100%,50%)"/>
<polygon points="167.85,87.38 168.90,90.40 155.43,94.58 154.69,92.43" fill="hsl(340.5,100%,50%)"/>
<polygon points="168.71,89.79 169.60,92.86 155.93,96.33 155.30,94.15" fill="hsl(343.5,100%,50%)"/>
<polygon points="169.43,92.24 170.16,95.36 156.33,98.11 155.81,95.89" fill="hsl(346.5,100%,50%)"/>
<polygon points="170.03,94.73 170.59,97.88 156.64,99.91 156.24,97.66" fill="hsl(349.5,100%,50%)"/>
<polygon points="170.50,97.25 170.89,100.43 156.85,101.72 156.57,99.46" fill="hsl(352.5,100%,50%)"/>
<polygon points="170.83,99.79 171.06,102.98 156.97,103.53 156.81,101.26" fill="hsl(355.5,100%,50%)"/>
<polygon points="171.03,102.34 171.10,105.54 157.00,105.36 156.95,103.08" fill="hsl(358.5,100%,50%)"/>
<circle cx="122.2" cy="104.9" r="41.849999999999994" fill="none" stroke="#262626" stroke-opacity="0" />
<circle cx="122.2" cy="104.9" r="48.9" fill="none" stroke="#262626" stroke-width="0.8"/>
<circle cx="122.2" cy="104.9" r="34.8" fill="none" stroke="#262626" stroke-width="0.8"/>
<rect x="98.20" y="80.80" width="49.20" height="48.40" fill="url(#gSVw)"/>
<rect x="98.20" y="80.80" width="49.20" height="48.40" fill="url(#gSVb)"/>
<circle cx="121" cy="107.3" r="3.3" fill="none" stroke="#fff" stroke-width="1.7"/>
<circle cx="164.4" cy="105" r="3.3" fill="none" stroke="#fff" stroke-width="1.7"/>
<rect x="29.80" y="148.20" width="17.20" height="10.80" fill="#484848" rx="2.5" stroke="#5a5a5a" stroke-width="1"/>
<g transform="translate(38.40,153.60) scale(0.55)"><path d="M0 -6a6.500 6 0 1 0 0.600 12c1.600 -0.100 1 -1.800 0.600 -2.600c-0.500 -1.200 0.600 -2 1.800 -1.800c2 0.300 3.600 -0.400 3.600 -2.200c0 -3 -3 -5.400 -6.600 -5.400z" fill="#ececec" /><circle cx="-2.8" cy="-2.2" r="1.2" fill="#484848"/><circle cx="0.6" cy="-3.6" r="1.2" fill="#484848"/><circle cx="3.6" cy="-1.6" r="1.2" fill="#484848"/><circle cx="-3.4" cy="1.6" r="1.2" fill="#484848"/></g>
<rect x="50.40" y="148.20" width="17.20" height="10.80" fill="#484848" rx="2.5" stroke="#5a5a5a" stroke-width="1"/>
<g transform="translate(59.00,153.60) scale(0.55)"><circle cx="-2" cy="-1.6" r="4.2" fill="#ececec"/><circle cx="-3" cy="-2.6" r="1.1" fill="#484848"/><circle cx="-0.4" cy="-2.8" r="1" fill="#484848"/><rect x="1" y="1.4" width="5.4" height="4.6" fill="#ececec"/><rect x="2" y="2.4" width="1.4" height="1.2" fill="#484848"/><rect x="4" y="2.4" width="1.4" height="1.2" fill="#484848"/></g>
<rect x="23.20" y="161.80" width="151.00" height="3.20" fill="#1e2d3c"/>
<rect x="23.20" y="164.90" width="151.00" height="1.05" fill="#6485a4"/>
<rect x="23.20" y="166.00" width="151.00" height="14.80" fill="url(#gHdr)"/>
<text transform="translate(86.45,176.80) scale(0.86,1)" font-size="9.3" fill="#d2d2d2" text-anchor="middle" font-weight="normal" >Brush Preview</text>
<path d="M155.2 170.2h-3.200v5.600h5.600v-3.200" stroke="#a8a8a8" stroke-width="1" fill="none"/>
<path d="M154.6 173.0l3.800-3.800m-2.400 0h2.400v2.400" stroke="#a8a8a8" stroke-width="1" fill="none"/>
<path d="M164.0 169.9l5.600 5.600m0-5.600l-5.600 5.600" stroke="#d6d6d6" stroke-width="2" fill="none"/>
<rect x="23.20" y="180.80" width="151.00" height="36.80" fill="#ffffff"/>
<rect x="60.00" y="180.80" width="114.20" height="36.80" fill="url(#chk2)"/>
<rect x="59.30" y="180.80" width="0.80" height="36.80" fill="#c3d3e3"/>
<text transform="translate(26.00,190.20) scale(0.93,1)" font-size="8.8" fill="#5b9bd5" text-anchor="start" font-weight="normal" >* 0.36mm</text>
<circle cx="41.4" cy="199.1" r="2.700" fill="#262626"/>
<path d="M71.6 197.2C84 191.5 94 188.6 102 188.6c12 0 20 6.5 29 10.6 9 4.2 20 4.4 36 -0.6 -15 6.8 -28 8 -38 3.4 -10 -4.6 -17 -11.2 -27.500 -11.400 -8.500 -0.1 -17.500 2.8 -29.900 6.6z" fill="#000"/>
<rect x="23.20" y="219.40" width="151.00" height="3.20" fill="#1e2d3c"/>
<rect x="23.20" y="222.50" width="151.00" height="1.05" fill="#6485a4"/>
<rect x="23.20" y="223.60" width="151.00" height="14.80" fill="url(#gHdr)"/>
<text transform="translate(86.45,234.40) scale(0.86,1)" font-size="9.3" fill="#d2d2d2" text-anchor="middle" font-weight="normal" >Brush Control</text>
<path d="M155.2 227.8h-3.200v5.600h5.600v-3.200" stroke="#a8a8a8" stroke-width="1" fill="none"/>
<path d="M154.6 230.6l3.800-3.800m-2.400 0h2.400v2.400" stroke="#a8a8a8" stroke-width="1" fill="none"/>
<path d="M164.0 227.5l5.600 5.600m0-5.600l-5.600 5.600" stroke="#d6d6d6" stroke-width="2" fill="none"/>
<rect x="29.70" y="247.20" width="106.20" height="11.00" fill="#ffffff"/>
<rect x="29.70" y="247.20" width="8.50" height="11.00" fill="#84c4f6"/>
<rect x="37.40" y="247.20" width="0.90" height="11.00" fill="#5b9fd6"/>
<rect x="141.00" y="245.00" width="26.00" height="15.50" fill="#444444" rx="2"/>
<text transform="translate(161.20,256.60) scale(1.0,1)" font-size="10" fill="#b0b0b0" text-anchor="end" font-weight="normal" >5</text>
<rect x="29.70" y="266.00" width="104.80" height="11.00" fill="url(#gBlue)"/>
<text transform="translate(140.00,274.90) scale(0.925,1)" font-size="10.3" fill="#d4d4d4" text-anchor="start" font-weight="normal" >100 %</text>
<rect x="23.20" y="352.80" width="151.00" height="3.20" fill="#25282d"/>
<rect x="23.20" y="355.90" width="151.00" height="1.05" fill="#555a6a"/>
<rect x="23.20" y="357.00" width="151.00" height="14.80" fill="url(#gHdr)"/>
<text transform="translate(86.45,367.80) scale(0.86,1)" font-size="9.3" fill="#d2d2d2" text-anchor="middle" font-weight="normal" >Brush: Pen</text>
<path d="M155.2 361.2h-3.200v5.600h5.600v-3.200" stroke="#a8a8a8" stroke-width="1" fill="none"/>
<path d="M154.6 364.0l3.800-3.800m-2.400 0h2.400v2.400" stroke="#a8a8a8" stroke-width="1" fill="none"/>
<path d="M164.0 360.9l5.600 5.600m0-5.600l-5.600 5.600" stroke="#d6d6d6" stroke-width="2" fill="none"/>
<clipPath id="blClip"><rect x="23" y="373.4" width="134" height="116.6"/></clipPath><g clip-path="url(#blClip)">
<rect x="24.00" y="373.40" width="133.00" height="14.20" fill="#4f9bd8"/>
<rect x="24.00" y="387.60" width="133.00" height="0.80" fill="#7c7c7c"/>
<rect x="26.20" y="375.30" width="10.60" height="10.50" fill="#2b2f38"/>
<text transform="translate(40.50,383.90) scale(0.95,1)" font-size="9.9" fill="#e06a6a" text-anchor="start" font-weight="normal" >5</text>
<text transform="translate(64.50,383.90) scale(0.96,1)" font-size="9.9" fill="#ffffff" text-anchor="start" font-weight="bold" >Pen</text>
<rect x="24.00" y="388.40" width="133.00" height="14.20" fill="#5a5a5a"/>
<rect x="24.00" y="402.60" width="133.00" height="0.80" fill="#7c7c7c"/>
<rect x="26.20" y="390.30" width="10.60" height="10.50" fill="#d0d0d0"/>
<text transform="translate(40.50,398.90) scale(0.95,1)" font-size="9.9" fill="#e06a6a" text-anchor="start" font-weight="normal" >150</text>
<text transform="translate(64.50,398.90) scale(0.877,1)" font-size="9.9" fill="#e8e8e8" text-anchor="start" font-weight="normal" >Làm mờ</text>
<rect x="24.00" y="403.40" width="133.00" height="14.20" fill="#5a5a5a"/>
<rect x="24.00" y="417.60" width="133.00" height="0.80" fill="#7c7c7c"/>
<rect x="26.20" y="405.30" width="10.60" height="10.50" fill="#2b2f38"/>
<text transform="translate(40.50,413.90) scale(0.95,1)" font-size="9.9" fill="#e06a6a" text-anchor="start" font-weight="normal" >30</text>
<text transform="translate(64.50,413.90) scale(0.94,1)" font-size="9.9" fill="#e8e8e8" text-anchor="start" font-weight="normal" >Pen (Sharp)</text>
<rect x="24.00" y="418.40" width="133.00" height="14.20" fill="#5a5a5a"/>
<rect x="24.00" y="432.60" width="133.00" height="0.80" fill="#7c7c7c"/>
<rect x="26.20" y="420.30" width="10.60" height="10.50" fill="#ff9bf5"/>
<text transform="translate(40.50,428.90) scale(0.95,1)" font-size="9.9" fill="#e8e8e8" text-anchor="start" font-weight="normal" >70</text>
<text transform="translate(64.50,428.90) scale(1.03,1)" font-size="9.9" fill="#e8e8e8" text-anchor="start" font-weight="normal" >Eff toc:&gt;&gt;</text>
<rect x="24.00" y="433.40" width="133.00" height="14.20" fill="#5a5a5a"/>
<rect x="24.00" y="447.60" width="133.00" height="0.80" fill="#7c7c7c"/>
<rect x="26.20" y="435.30" width="10.60" height="10.50" fill="#79dcff"/>
<text transform="translate(40.50,443.90) scale(0.95,1)" font-size="9.9" fill="#e8e8e8" text-anchor="start" font-weight="normal" >41</text>
<text transform="translate(64.50,443.90) scale(0.953,1)" font-size="9.9" fill="#e8e8e8" text-anchor="start" font-weight="normal" >Shade tóc</text>
<rect x="24.00" y="448.40" width="133.00" height="14.20" fill="#5a5a5a"/>
<rect x="24.00" y="462.60" width="133.00" height="0.80" fill="#7c7c7c"/>
<rect x="26.20" y="450.30" width="10.60" height="10.50" fill="#ff2d2d"/>
<text transform="translate(40.50,458.90) scale(0.95,1)" font-size="9.9" fill="#e8e8e8" text-anchor="start" font-weight="normal" >200</text>
<text transform="translate(64.50,458.90) scale(0.9,1)" font-size="9.9" fill="#e8e8e8" text-anchor="start" font-weight="normal" >Cali</text>
<rect x="24.00" y="463.40" width="133.00" height="14.20" fill="#5a5a5a"/>
<rect x="24.00" y="477.60" width="133.00" height="0.80" fill="#7c7c7c"/>
<rect x="26.20" y="465.30" width="10.60" height="10.50" fill="#2f4bff"/>
<text transform="translate(40.50,473.90) scale(0.95,1)" font-size="9.9" fill="#e8e8e8" text-anchor="start" font-weight="normal" >300</text>
<text transform="translate(64.50,473.90) scale(0.85,1)" font-size="9.9" fill="#e8e8e8" text-anchor="start" font-weight="normal" >Sao</text>
<rect x="24.00" y="478.40" width="133.00" height="14.20" fill="#5a5a5a"/>
<rect x="24.00" y="492.60" width="133.00" height="0.80" fill="#7c7c7c"/>
<rect x="26.20" y="480.30" width="10.60" height="10.50" fill="#ff2d2d"/>
<text transform="translate(40.50,488.90) scale(0.95,1)" font-size="9.9" fill="#e8e8e8" text-anchor="start" font-weight="normal" >15</text>
<text transform="translate(64.50,488.90) scale(0.9,1)" font-size="9.9" fill="#e8e8e8" text-anchor="start" font-weight="normal" >Mapping Pen</text>
</g>
<g transform="translate(149.50,380.80) scale(0.62)"><polygon points="3.88,-0.99 6.64,-0.87 6.64,0.87 3.88,0.99 3.44,2.04 5.31,4.08 4.08,5.31 2.04,3.44 0.99,3.88 0.87,6.64 -0.87,6.64 -0.99,3.88 -2.04,3.44 -4.08,5.31 -5.31,4.08 -3.44,2.04 -3.88,0.99 -6.64,0.87 -6.64,-0.87 -3.88,-0.99 -3.44,-2.04 -5.31,-4.08 -4.08,-5.31 -2.04,-3.44 -0.99,-3.88 -0.87,-6.64 0.87,-6.64 0.99,-3.88 2.04,-3.44 4.08,-5.31 5.31,-4.08 3.44,-2.04" fill="#ffffff"/><circle cx="0" cy="0" r="4.3" fill="#ffffff"/><circle cx="0" cy="0" r="1.1" fill="#5a7ea0"/></g>
<rect x="157.20" y="373.40" width="15.00" height="116.60" fill="url(#gTrackV)"/>
<path d="M161.9 379.0h5.600l-2.800-4.600z" fill="#a4a4a4"/>
<path d="M161.9 484.4h5.600l-2.800 4.600z" fill="#a4a4a4"/>
<rect x="158.40" y="382.00" width="13.40" height="35.50" fill="url(#gThumbV)" rx="3.5"/>
<rect x="23.20" y="490.00" width="151.00" height="23.40" fill="#262626"/>
<rect x="27.30" y="493.20" width="17.20" height="17.40" fill="#484848" rx="2.5"/>
<g transform="translate(35.90,502.00) scale(0.82)"><path d="M-4.600 1.600a2.700 2.700 0 0 1 -0.300 -5.400a3.600 3.600 0 0 1 6.800 -1.300a3.100 3.100 0 0 1 3.600 3.300a2 2 0 0 1 -0.600 3.400z" fill="#f4f4f4" /><path d="M-1.200 -1.400h2.400v4h2l-3.200 3.800l-3.200 -3.800h2z" fill="#f4f4f4" /><path d="M-1.200 -1.400v4h-2l3.200 3.800l3.200 -3.800h-2v-4" fill="none" stroke="#484848" stroke-width="0.7" stroke-linecap="round" stroke-linejoin="round" /><rect x="-2.6" y="7" width="5.2" height="1.3" fill="#f4f4f4"/></g>
<rect x="47.60" y="493.20" width="17.20" height="17.40" fill="#484848" rx="2.5"/>
<g transform="translate(56.20,502.00) scale(0.82)"><path d="M-4.400 -6h5.600l3.400 3.400v8.800h-9z" fill="none" stroke="#ececec" stroke-width="1.2" stroke-linecap="round" stroke-linejoin="round" /><path d="M1.200 -6v3.400h3.400" fill="none" stroke="#ececec" stroke-width="1" stroke-linecap="round" stroke-linejoin="round" /></g>
<rect x="68.00" y="493.20" width="21.80" height="17.40" fill="#484848" rx="2.5"/>
<g transform="translate(75.00,502.00) scale(0.82)"><path d="M-4.400 -6h5.600l3.400 3.400v8.800h-9z" fill="none" stroke="#ececec" stroke-width="1.2" stroke-linecap="round" stroke-linejoin="round" /><rect x="-2.8" y="-1.6" width="3.2" height="3.2" fill="#ececec"/><rect x="0.4" y="1.6" width="3.2" height="3.2" fill="#ececec"/><rect x="-2.8" y="1.6" width="3.2" height="3.2" fill="#8a8a8a"/><rect x="0.4" y="-1.6" width="3.2" height="3.2" fill="#8a8a8a"/></g>
<rect x="93.00" y="493.20" width="17.40" height="17.40" fill="#484848" rx="2.5"/>
<g transform="translate(101.70,502.00) scale(0.82)"><path d="M-4.400 -6h5.600l3.400 3.400v8.800h-9z" fill="none" stroke="#ececec" stroke-width="1.2" stroke-linecap="round" stroke-linejoin="round" /><path d="M1.200 -6v3.400h3.400" fill="none" stroke="#ececec" stroke-width="1" stroke-linecap="round" stroke-linejoin="round" /><text x="0" y="5.200" font-size="8.800" font-weight="bold" text-anchor="middle" fill="#ececec">S</text></g>
<rect x="113.80" y="493.20" width="17.20" height="17.40" fill="#484848" rx="2.5"/>
<g transform="translate(122.40,502.00) scale(0.82)"><path d="M-6.400 -4.400h4.600l1.400 1.600h6.800v8h-12.800z" fill="#ececec" /><path d="M-5.200 -1h10.400" fill="none" stroke="#9a9a9a" stroke-width="0.7" stroke-linecap="round" stroke-linejoin="round" /></g>
<rect x="134.20" y="493.20" width="17.30" height="17.40" fill="#484848" rx="2.5"/>
<g transform="translate(142.85,502.00) scale(0.82)"><rect x="-2.4" y="-5.6" width="8.4" height="8.4" fill="none" stroke="#ececec" stroke-width="1.2"/><rect x="-5.8" y="-2.6" width="8.4" height="8.4" fill="#484848" stroke="#ececec" stroke-width="1.2"/></g>
<path d="M82.800 500.400h5.600l-2.800 3.300z" fill="#f0f0f0"/>
<line x1="155.20" y1="498.00" x2="155.20" y2="506.00" stroke="#555" stroke-width="1"/>
<rect x="163.80" y="494.00" width="6.20" height="16.40" fill="#555555" rx="2.5"/>
<rect x="177.50" y="39.00" width="574.80" height="17.00" fill="#262626"/>
<path d="M560.8 56V42.500a3 3 0 0 1 3-3h89.800a3 3 0 0 1 3 3V56z" fill="url(#gTab)"/>
<text transform="translate(224.60,51.90) scale(0.88,1)" font-size="8.8" fill="#cfcfcf" text-anchor="middle" font-weight="normal" >22.png</text>
<text transform="translate(320.60,51.90) scale(0.88,1)" font-size="8.8" fill="#cfcfcf" text-anchor="middle" font-weight="normal" >20.png</text>
<text transform="translate(416.60,51.90) scale(0.88,1)" font-size="8.8" fill="#cfcfcf" text-anchor="middle" font-weight="normal" >34.png</text>
<text transform="translate(512.60,51.90) scale(0.88,1)" font-size="8.8" fill="#cfcfcf" text-anchor="middle" font-weight="normal" >Untitled</text>
<text transform="translate(608.60,51.90) scale(0.88,1)" font-size="8.8" fill="#cfcfcf" text-anchor="middle" font-weight="normal" >34.png</text>
<line x1="273.00" y1="41.00" x2="273.00" y2="56.00" stroke="#1b1b1b" stroke-width="1"/>
<line x1="369.00" y1="41.00" x2="369.00" y2="56.00" stroke="#1b1b1b" stroke-width="1"/>
<line x1="465.00" y1="41.00" x2="465.00" y2="56.00" stroke="#1b1b1b" stroke-width="1"/>
<rect x="177.50" y="56.00" width="560.00" height="443.50" fill="#ffffff"/>
<g clip-path="url(#cvClip)"><circle cx="355.400" cy="38.300" r="56.300" fill="#ffccb8"/><circle cx="579.800" cy="36.200" r="55.200" fill="#ffccb8"/><path d="M255 40C262 66 272 88 285.500 106.600C294 118 302 129 311 137C322 144.500 340 145.700 380 157L405 160.500" fill="none" stroke="#763c3d" stroke-width="23" stroke-linecap="round" stroke-linejoin="round"/><path d="M386.500 166L358.600 256" fill="none" stroke="#763c3d" stroke-width="22.5" stroke-linecap="round" stroke-linejoin="round"/><path d="M409 154L416.500 138C419.500 131.500 425.500 131.500 428.500 137L439.500 156.500" fill="none" stroke="#763c3d" stroke-width="15" stroke-linecap="round" stroke-linejoin="round"/><path d="M673.500 40C667.500 62 661.500 74 656.300 84C650.500 95 645.500 101 641 106.600C635.500 113 629.500 119 623 124.700C616 131 610 136 601.900 140.600C592 146 582 149.500 568 153L541 159.500" fill="none" stroke="#763c3d" stroke-width="25" stroke-linecap="round" stroke-linejoin="round"/><path d="M551 168C556 195 561 220 563.500 233.200L567.200 255" fill="none" stroke="#763c3d" stroke-width="23.5" stroke-linecap="round" stroke-linejoin="round"/><path d="M505.700 157L511 140C514 131 519 127.500 523 130C527 133 531 148 536.600 161" fill="none" stroke="#763c3d" stroke-width="15.5" stroke-linecap="round" stroke-linejoin="round"/><path d="M621.800 90.500C620 99 618 106 614.300 111.100C610 114 605 116 599 116.800" fill="none" stroke="#763c3d" stroke-width="7.5" stroke-linecap="round" stroke-linejoin="round"/><g aria-label="Siyeol #HD247"><text transform="translate(371.5,330.5) rotate(-4) scale(1.2,1.0)" font-family="&quot;Liberation Sans&quot;, sans-serif" font-size="44" font-weight="normal" fill="#763c3d" stroke="#763c3d" stroke-width="1.0" stroke-linejoin="round" stroke-linecap="round">S</text><text transform="translate(415,328) rotate(3) scale(1.0,1.0)" font-family="&quot;Liberation Sans&quot;, sans-serif" font-size="39" font-weight="normal" fill="#763c3d" stroke="#763c3d" stroke-width="1.2" stroke-linejoin="round" stroke-linecap="round">i</text><text transform="translate(429,328.5) rotate(-4) scale(1.6,1.0)" font-family="&quot;Liberation Sans&quot;, sans-serif" font-size="37" font-weight="normal" fill="#763c3d" stroke="#763c3d" stroke-width="0.9" stroke-linejoin="round" stroke-linecap="round">y</text><text transform="translate(460,327.5) rotate(-8) scale(1.0,1.0)" font-family="&quot;Liberation Sans&quot;, sans-serif" font-size="39" font-weight="normal" fill="#763c3d" stroke="#763c3d" stroke-width="1.0" stroke-linejoin="round" stroke-linecap="round">e</text><text transform="translate(483,328.2) rotate(0) scale(1.15,1.0)" font-family="&quot;Liberation Sans&quot;, sans-serif" font-size="19" font-weight="normal" fill="#763c3d" stroke="#763c3d" stroke-width="2.0" stroke-linejoin="round" stroke-linecap="round">o</text><text transform="translate(505.5,326.5) rotate(8) scale(1.0,1.0)" font-family="&quot;Liberation Sans&quot;, sans-serif" font-size="37" font-weight="normal" fill="#763c3d" stroke="#763c3d" stroke-width="1.6" stroke-linejoin="round" stroke-linecap="round">l</text><text transform="translate(419.500,375) rotate(-92) scale(1,1.46) skewX(12)" font-family="&quot;Liberation Sans&quot;, sans-serif" font-size="64" fill="#763c3d" stroke="#763c3d" stroke-width="0.8" stroke-linejoin="round">#</text><text transform="translate(426.5,378.5) rotate(6) scale(0.62,1.0)" font-family="&quot;Liberation Sans&quot;, sans-serif" font-size="36" font-weight="normal" fill="#763c3d" stroke="#763c3d" stroke-width="2.4" stroke-linejoin="round" stroke-linecap="round">H</text><text transform="translate(446,376) rotate(2) scale(0.95,1.0)" font-family="&quot;Liberation Sans&quot;, sans-serif" font-size="30" font-weight="normal" fill="#763c3d" stroke="#763c3d" stroke-width="2.2" stroke-linejoin="round" stroke-linecap="round">D</text><text transform="translate(477.5,373) rotate(-3) scale(1.42,1.0)" font-family="&quot;Liberation Sans&quot;, sans-serif" font-size="30" font-weight="normal" fill="#763c3d" stroke="#763c3d" stroke-width="1.6" stroke-linejoin="round" stroke-linecap="round">2</text><text transform="translate(504,374.5) rotate(4) scale(1.25,1.0)" font-family="&quot;Liberation Sans&quot;, sans-serif" font-size="34" font-weight="normal" fill="#763c3d" stroke="#763c3d" stroke-width="1.3" stroke-linejoin="round" stroke-linecap="round">4</text><text transform="translate(536,374.5) rotate(3) scale(1.0,1.0)" font-family="&quot;Liberation Sans&quot;, sans-serif" font-size="37.5" font-weight="normal" fill="#763c3d" stroke="#763c3d" stroke-width="1.4" stroke-linejoin="round" stroke-linecap="round">7</text></g></g>
<rect x="737.50" y="56.00" width="15.00" height="443.50" fill="url(#gTrackV)"/>
<path d="M742.200 64.600h5.600l-2.800-4.600z" fill="#9c9c9c"/>
<path d="M742.300 493h5.600l-2.800 4.400z" fill="#8e8e8e"/>
<rect x="737.80" y="281.00" width="14.20" height="81.60" fill="url(#gThumbV)" rx="3"/>
<rect x="177.50" y="499.50" width="575.00" height="13.80" fill="url(#gTrackH)"/>
<rect x="177.50" y="499.50" width="8.60" height="13.80" fill="#2b2b2b"/>
<path d="M184.300 503.800v5.600l-5-2.800z" fill="#959595"/>
<rect x="743.80" y="499.50" width="8.60" height="13.80" fill="#2b2b2b"/>
<path d="M745.800 503.800v5.600l5-2.800z" fill="#909090"/>
<rect x="413.50" y="500.60" width="116.00" height="12.00" fill="url(#gThumbH)" rx="3.5"/>
<rect x="174.40" y="39.00" width="3.20" height="475.00" fill="#222222"/>
<rect x="752.30" y="39.00" width="3.60" height="475.00" fill="#232323"/>
<rect x="755.80" y="39.00" width="268.20" height="476.40" fill="#262626"/>
<rect x="755.80" y="37.20" width="268.20" height="1.80" fill="#1e2d3c"/>
<rect x="755.80" y="38.90" width="268.20" height="1.05" fill="#7393b2"/>
<rect x="755.80" y="40.00" width="268.20" height="14.80" fill="url(#gHdr)"/>
<text transform="translate(877.65,50.80) scale(0.86,1)" font-size="9.3" fill="#d2d2d2" text-anchor="middle" font-weight="normal" >Navigator</text>
<path d="M1005.0 44.2h-3.200v5.600h5.600v-3.200" stroke="#a8a8a8" stroke-width="1" fill="none"/>
<path d="M1004.4 47.0l3.800-3.800m-2.400 0h2.400v2.400" stroke="#a8a8a8" stroke-width="1" fill="none"/>
<path d="M1013.8 43.9l5.600 5.600m0-5.600l-5.600 5.600" stroke="#d6d6d6" stroke-width="2" fill="none"/>
<rect x="755.80" y="55.80" width="268.20" height="22.20" fill="#272727"/>
<rect x="759.00" y="58.00" width="17.40" height="16.80" fill="#484848" rx="2.5"/>
<g transform="translate(767.70,66.40) scale(0.82)"><circle cx="-1.4" cy="-1.4" r="3.7" fill="none" stroke="#ececec" stroke-width="1.3"/><path d="M1.600 1.600l3.800 3.800" fill="none" stroke="#ececec" stroke-width="1.9" stroke-linecap="round" stroke-linejoin="round" /><text x="-1.400" y="0.800" font-size="6" font-weight="bold" text-anchor="middle" fill="#ececec">1</text></g>
<rect x="784.80" y="58.00" width="17.40" height="16.80" fill="#484848" rx="2.5"/>
<g transform="translate(793.50,66.40) scale(0.82)"><circle cx="-1.4" cy="-1.4" r="3.7" fill="none" stroke="#ececec" stroke-width="1.3"/><path d="M1.600 1.600l3.800 3.800" fill="none" stroke="#ececec" stroke-width="1.9" stroke-linecap="round" stroke-linejoin="round" /><path d="M-3.300 -1.400h3.800M-1.400 -3.300v3.800" fill="none" stroke="#ececec" stroke-width="1.2" stroke-linecap="round" stroke-linejoin="round" /></g>
<rect x="805.20" y="58.00" width="17.40" height="16.80" fill="#484848" rx="2.5"/>
<g transform="translate(813.90,66.40) scale(0.82)"><rect x="-6" y="-5.6" width="12" height="11.2" fill="none" stroke="#d8d8d8" stroke-width="1"/><path d="M-4.600 -4.200h2.800l-2.800 2.800zM4.600 -4.200h-2.800l2.800 2.800zM-4.600 4.200h2.800l-2.800 -2.800zM4.600 4.200h-2.800l2.800 -2.800z" fill="#ececec" /><path d="M-3.600 -3.200l2.400 2.200M3.600 -3.200l-2.400 2.200M-3.600 3.200l2.400 -2.200M3.600 3.200l-2.400 -2.200" fill="none" stroke="#ececec" stroke-width="1.1" stroke-linecap="round" stroke-linejoin="round" /></g>
<rect x="825.60" y="58.00" width="17.40" height="16.80" fill="#484848" rx="2.5"/>
<g transform="translate(834.30,66.40) scale(0.82)"><circle cx="-1.4" cy="-1.4" r="3.7" fill="none" stroke="#ececec" stroke-width="1.3"/><path d="M1.600 1.600l3.800 3.800" fill="none" stroke="#ececec" stroke-width="1.9" stroke-linecap="round" stroke-linejoin="round" /><path d="M-3.300 -1.400h3.800" fill="none" stroke="#ececec" stroke-width="1.2" stroke-linecap="round" stroke-linejoin="round" /></g>
<rect x="851.40" y="58.00" width="17.40" height="16.80" fill="#484848" rx="2.5"/>
<g transform="translate(860.10,66.40) scale(0.82)"><path d="M-3.800 -4.800a6 6 0 1 1 -2 3.600" fill="none" stroke="#ececec" stroke-width="1.400"/><path d="M-1 -7.400l-4.600 2.200l4 2.800z" fill="#ececec" /><g transform="rotate(-20)"><rect x="-2.8" y="-2" width="5.6" height="4.4" fill="#ececec"/></g></g>
<rect x="872.20" y="58.40" width="16.60" height="16.00" fill="#222" rx="2.5" stroke="#4a4a4a" stroke-width="1"/>
<g transform="translate(880.50,66.40) scale(0.82)"><rect x="-4" y="-3.4" width="8" height="6.8" fill="#f4f4f4"/><path d="M-6.400 -3.400v-2.400h2.600M6.400 -3.400v-2.400h-2.600M-6.400 3.400v2.400h2.600M6.400 3.400v2.400h-2.600" fill="none" stroke="#f4f4f4" stroke-width="1.3" stroke-linecap="round" stroke-linejoin="round" /></g>
<rect x="892.20" y="58.00" width="17.40" height="16.80" fill="#484848" rx="2.5"/>
<g transform="translate(900.90,66.40) scale(0.82)"><path d="M3.800 -4.800a6 6 0 1 0 2 3.600" fill="none" stroke="#ececec" stroke-width="1.400"/><path d="M1 -7.400l4.600 2.200l-4 2.800z" fill="#ececec" /><g transform="rotate(20)"><rect x="-2.8" y="-2" width="5.6" height="4.4" fill="#ececec"/></g></g>
<rect x="918.00" y="58.00" width="17.40" height="16.80" fill="#484848" rx="2.5"/>
<g transform="translate(926.70,66.40) scale(0.82)"><rect x="-6" y="-1.4" width="4.6" height="7" fill="#ececec"/><rect x="1.4" y="-1.4" width="4.6" height="7" fill="none" stroke="#ececec" stroke-width="1.1"/><path d="M-3.800 -2.600c0 -5 7.600 -5 7.600 -0.400" fill="none" stroke="#ececec" stroke-width="1.200"/><path d="M2 -3.400h3.600l-1.800 2.400z" fill="#ececec" /><path d="M0 -2v8" fill="none" stroke="#aaa" stroke-width="0.6" stroke-linecap="round" stroke-linejoin="round" /></g>
<line x1="780.60" y1="61.00" x2="780.60" y2="72.00" stroke="#4a4a4a" stroke-width="1"/>
<line x1="847.20" y1="61.00" x2="847.20" y2="72.00" stroke="#4a4a4a" stroke-width="1"/>
<line x1="913.80" y1="61.00" x2="913.80" y2="72.00" stroke="#4a4a4a" stroke-width="1"/>
<rect x="755.80" y="77.00" width="268.20" height="33.20" fill="#474747"/>
<rect x="874.00" y="78.20" width="31.60" height="31.60" fill="#ffffff"/>
<path d="M884 93.500v-4a7.200 7.200 0 0 1 14.400 0v4" fill="none" stroke="#b49a9c" stroke-width="0.800"/><path d="M888.500 81.600c1.200 0 2 0.600 2.400 1.400" fill="none" stroke="#b08a8c" stroke-width="0.900"/><ellipse cx="897.400" cy="85.600" rx="2.400" ry="3" transform="rotate(-30 897.400 85.600)" fill="#a050b4" fill-opacity="0.700"/><circle cx="898.800" cy="86.800" r="1.600" fill="#b070c4" fill-opacity="0.500"/><path d="M885.400 97.400l1.400 1.600l1.400 -1.600m-1.400 1.600v2.400M893.600 97.400l1.400 1.600l1.400 -1.600m-1.400 1.600v2.400" fill="none" stroke="#8a5052" stroke-width="1"/><path d="M888.800 104h3.600" stroke="#b49a9c" stroke-width="0.600"/><path d="M901 91.500l1.200 1.800" stroke="#9a86b0" stroke-width="0.700"/><rect x="882.300" y="94.600" width="17.400" height="12.600" fill="none" stroke="#ff0a0a" stroke-width="1.300"/>
<rect x="755.80" y="110.20" width="268.20" height="3.20" fill="#1e2d3c"/>
<rect x="755.80" y="113.30" width="268.20" height="1.05" fill="#6485a4"/>
<rect x="755.80" y="114.40" width="268.20" height="14.80" fill="url(#gHdr)"/>
<text transform="translate(877.65,125.20) scale(0.86,1)" font-size="9.3" fill="#d2d2d2" text-anchor="middle" font-weight="normal" >Layer</text>
<path d="M1005.0 118.6h-3.200v5.600h5.600v-3.200" stroke="#a8a8a8" stroke-width="1" fill="none"/>
<path d="M1004.4 121.4l3.800-3.800m-2.400 0h2.400v2.400" stroke="#a8a8a8" stroke-width="1" fill="none"/>
<path d="M1013.8 118.3l5.600 5.600m0-5.600l-5.600 5.600" stroke="#d6d6d6" stroke-width="2" fill="none"/>
<text transform="translate(760.60,144.00) scale(0.86,1)" font-size="9" fill="#d4d4d4" text-anchor="start" font-weight="normal" >Opacity</text>
<rect x="828.00" y="134.60" width="155.40" height="10.60" fill="url(#gBlue)"/>
<text transform="translate(988.50,144.20) scale(0.95,1)" font-size="8.8" fill="#d4d4d4" text-anchor="start" font-weight="normal" >100 %</text>
<text transform="translate(760.60,162.60) scale(0.86,1)" font-size="9" fill="#d4d4d4" text-anchor="start" font-weight="normal" >Blending</text>
<rect x="829.50" y="151.20" width="189.00" height="15.60" fill="#484848" rx="2"/>
<text transform="translate(831.50,162.40) scale(0.88,1)" font-size="8.8" fill="#d4d4d4" text-anchor="start" font-weight="normal" >Normal</text>
<path d="M1009.500 157.500h5l-2.500 3z" fill="#c8c8c8"/>
<rect x="763.20" y="174.80" width="7.60" height="7.80" fill="#242424" stroke="#bdbdbd" stroke-width="1"/>
<text transform="translate(775.00,182.40) scale(0.92,1)" font-size="9" fill="#d4d4d4" text-anchor="start" font-weight="normal" >Protect Alpha</text>
<rect x="851.20" y="174.80" width="7.60" height="7.80" fill="#242424" stroke="#bdbdbd" stroke-width="1"/>
<text transform="translate(863.50,182.40) scale(0.86,1)" font-size="9" fill="#d4d4d4" text-anchor="start" font-weight="normal" >Clipping</text>
<rect x="938.20" y="174.80" width="7.60" height="7.80" fill="#242424" stroke="#bdbdbd" stroke-width="1"/>
<text transform="translate(950.60,182.40) scale(0.86,1)" font-size="9" fill="#d4d4d4" text-anchor="start" font-weight="normal" >Lock</text>
<rect x="757.60" y="189.80" width="249.00" height="28.90" fill="#595959"/>
<rect x="772.60" y="189.80" width="234.00" height="28.90" fill="#4f9bd8"/>
<rect x="757.60" y="218.70" width="249.00" height="0.85" fill="#2c2c2c"/>
<circle cx="765" cy="204.20" r="3.700" fill="#d0d0d0"/>
<rect x="783.60" y="191.20" width="26.40" height="26.20" fill="url(#chk3)"/>
<text transform="translate(822.20,207.80) scale(0.99,1)" font-size="10" fill="#ffffff" text-anchor="start" font-weight="bold" >Siyeol</text>
<rect x="757.60" y="219.55" width="249.00" height="28.90" fill="#595959"/>
<rect x="757.60" y="248.45" width="249.00" height="0.85" fill="#2c2c2c"/>
<circle cx="765" cy="233.95" r="3.700" fill="#d0d0d0"/>
<rect x="783.60" y="220.95" width="26.40" height="26.20" fill="url(#chk3)"/>
<text transform="translate(822.20,237.55) scale(0.91,1)" font-size="10" fill="#e6e6e6" text-anchor="start" font-weight="normal" >Layer3</text>
<rect x="757.60" y="249.30" width="249.00" height="28.90" fill="#595959"/>
<rect x="757.60" y="278.20" width="249.00" height="0.85" fill="#2c2c2c"/>
<circle cx="765" cy="263.70" r="3.700" fill="#d0d0d0"/>
<rect x="783.60" y="250.70" width="26.40" height="26.20" fill="url(#chk3)"/>
<text transform="translate(822.20,267.30) scale(0.91,1)" font-size="10" fill="#e6e6e6" text-anchor="start" font-weight="normal" >Layer1</text>
<rect x="757.60" y="279.05" width="249.00" height="28.90" fill="#595959"/>
<rect x="757.60" y="307.95" width="249.00" height="0.85" fill="#2c2c2c"/>
<circle cx="765" cy="293.45" r="3.700" fill="#d0d0d0"/>
<rect x="783.60" y="280.45" width="26.40" height="26.20" fill="#ffffff"/>
<text transform="translate(822.20,297.05) scale(0.91,1)" font-size="10" fill="#e6e6e6" text-anchor="start" font-weight="normal" >Layer2</text>
<path d="M795 212.500h3.500M794.500 214h4.500" stroke="#b89a9a" stroke-width="0.600"/><circle cx="803" cy="227" r="2.100" fill="#9a4ab0" fill-opacity="0.800"/><circle cx="802" cy="225.600" r="1" fill="#9a4ab0" fill-opacity="0.600"/><circle cx="797.600" cy="262.800" r="6.200" fill="#fffaf8" stroke="#8a6466" stroke-width="0.750"/><circle cx="794.600" cy="262.600" r="2.100" fill="#f8cfc0" fill-opacity="0.850"/><circle cx="800.600" cy="262.600" r="2.100" fill="#f8cfc0" fill-opacity="0.850"/><path d="M795.800 253.600c1 0.600 1.700 1.600 2 3M795.200 268.600v2.600M800 268.600v2.600M803.600 260.600l1.600 -1" fill="none" stroke="#8a6466" stroke-width="0.700"/>
<g transform="translate(997.60,204.20) scale(1.0)"><polygon points="3.88,-0.99 6.64,-0.87 6.64,0.87 3.88,0.99 3.44,2.04 5.31,4.08 4.08,5.31 2.04,3.44 0.99,3.88 0.87,6.64 -0.87,6.64 -0.99,3.88 -2.04,3.44 -4.08,5.31 -5.31,4.08 -3.44,2.04 -3.88,0.99 -6.64,0.87 -6.64,-0.87 -3.88,-0.99 -3.44,-2.04 -5.31,-4.08 -4.08,-5.31 -2.04,-3.44 -0.99,-3.88 -0.87,-6.64 0.87,-6.64 0.99,-3.88 2.04,-3.44 4.08,-5.31 5.31,-4.08 3.44,-2.04" fill="#ffffff"/><circle cx="0" cy="0" r="4.3" fill="#ffffff"/><circle cx="0" cy="0" r="1.1" fill="#5a7ea0"/></g>
<rect x="757.60" y="308.80" width="249.00" height="17.60" fill="#454545"/>
<rect x="1007.00" y="189.80" width="15.40" height="136.60" fill="url(#gTrackV)"/>
<path d="M1011.9 195.4h5.600l-2.800-4.600z" fill="#a4a4a4"/>
<path d="M1011.9 320.8h5.600l-2.800 4.600z" fill="#a4a4a4"/>
<rect x="1008.20" y="197.60" width="13.80" height="118.60" fill="url(#gThumbV)" rx="3.5"/>
<rect x="760.60" y="329.20" width="17.20" height="17.40" fill="#484848" rx="2.5"/>
<g transform="translate(769.20,338.00) scale(0.82)"><path d="M-4.400 -6h5.600l3.400 3.400v8.800h-9z" fill="none" stroke="#ececec" stroke-width="1.2" stroke-linecap="round" stroke-linejoin="round" /><path d="M1.200 -6v3.400h3.400" fill="none" stroke="#ececec" stroke-width="1" stroke-linecap="round" stroke-linejoin="round" /></g>
<rect x="781.00" y="329.20" width="17.20" height="17.40" fill="#484848" rx="2.5"/>
<g transform="translate(789.60,338.00) scale(0.82)"><path d="M-4.400 -6h5.600l3.400 3.400v8.800h-9z" fill="none" stroke="#ececec" stroke-width="1.2" stroke-linecap="round" stroke-linejoin="round" /><path d="M1.200 -6v3.400h3.400" fill="none" stroke="#ececec" stroke-width="1" stroke-linecap="round" stroke-linejoin="round" /><text x="0" y="4.600" font-size="6.500" font-weight="bold" text-anchor="middle" fill="#ececec">8</text></g>
<rect x="801.30" y="329.20" width="17.40" height="17.40" fill="#484848" rx="2.5"/>
<g transform="translate(810.00,338.00) scale(0.82)"><path d="M-4.400 -6h5.600l3.400 3.400v8.800h-9z" fill="none" stroke="#ececec" stroke-width="1.2" stroke-linecap="round" stroke-linejoin="round" /><path d="M1.200 -6v3.400h3.400" fill="none" stroke="#ececec" stroke-width="1" stroke-linecap="round" stroke-linejoin="round" /><text x="0" y="4.600" font-size="6.500" font-weight="bold" text-anchor="middle" fill="#ececec">1</text></g>
<rect x="822.00" y="329.20" width="22.00" height="17.40" fill="#484848" rx="2.5"/>
<g transform="translate(829.00,338.00) scale(0.82)"><path d="M0 5.400h-4.400v-11.400h5.600l3.400 3.400v3.400" fill="none" stroke="#ececec" stroke-width="1.2" stroke-linecap="round" stroke-linejoin="round" /><path d="M1.200 -6v3.400h3.400" fill="none" stroke="#ececec" stroke-width="1" stroke-linecap="round" stroke-linejoin="round" /><path d="M3.600 2v6.400M0.400 5.200h6.400" fill="none" stroke="#ececec" stroke-width="1.7" stroke-linecap="round" stroke-linejoin="round" /></g>
<rect x="847.00" y="329.20" width="17.40" height="17.40" fill="#484848" rx="2.5"/>
<g transform="translate(855.70,338.00) scale(0.82)"><path d="M-6.400 -4.400h4.600l1.400 1.600h6.800v8h-12.800z" fill="#ececec" /><path d="M-5.200 -1h10.400" fill="none" stroke="#9a9a9a" stroke-width="0.7" stroke-linecap="round" stroke-linejoin="round" /></g>
<rect x="872.80" y="329.20" width="17.40" height="17.40" fill="#484848" rx="2.5"/>
<g transform="translate(881.50,338.00) scale(0.82)"><rect x="-2.4" y="-5.6" width="8.4" height="8.4" fill="none" stroke="#ececec" stroke-width="1.2"/><rect x="-5.8" y="-2.6" width="8.4" height="8.4" fill="#484848" stroke="#ececec" stroke-width="1.2"/></g>
<rect x="893.20" y="329.20" width="17.40" height="17.40" fill="#484848" rx="2.5"/>
<g transform="translate(901.90,338.00) scale(0.82)"><rect x="-6" y="-6" width="4.4" height="4.4" fill="none" stroke="#ececec" stroke-width="1.1"/><rect x="-6" y="1.6" width="4.4" height="4.4" fill="none" stroke="#ececec" stroke-width="1.1"/><rect x="1.4" y="-2.4" width="5" height="5" fill="#ececec"/><path d="M-1.600 -3.800h1.400v7.600h-1.400M-0.200 0h1.600" fill="none" stroke="#ececec" stroke-width="1" stroke-linecap="round" stroke-linejoin="round" /></g>
<rect x="919.00" y="329.20" width="17.40" height="17.40" fill="#484848" rx="2.5"/>
<g transform="translate(927.70,338.00) scale(0.82)"><rect x="-4.6" y="-3.2" width="9.2" height="9.6" fill="none" rx="1" stroke="#ececec" stroke-width="1.3"/><path d="M-6.200 -3.400h12.400M-2 -3.600v-2h4v2" fill="none" stroke="#ececec" stroke-width="1.3" stroke-linecap="round" stroke-linejoin="round" /><path d="M-1.800 -0.800v5M0 -0.800v5M1.800 -0.800v5" fill="none" stroke="#ececec" stroke-width="1" stroke-linecap="round" stroke-linejoin="round" /></g>
<path d="M836.600 336.400h5.800l-2.900 3.400z" fill="#f0f0f0"/>
<line x1="868.60" y1="333.00" x2="868.60" y2="343.00" stroke="#4a4a4a" stroke-width="1"/>
<line x1="914.80" y1="333.00" x2="914.80" y2="343.00" stroke="#4a4a4a" stroke-width="1"/>
<rect x="755.80" y="351.80" width="268.20" height="3.20" fill="#1e2d3c"/>
<rect x="755.80" y="354.90" width="268.20" height="1.05" fill="#6485a4"/>
<rect x="755.80" y="356.00" width="268.20" height="14.80" fill="url(#gHdr)"/>
<text transform="translate(877.65,366.80) scale(0.86,1)" font-size="9.3" fill="#d2d2d2" text-anchor="middle" font-weight="normal" >Reference</text>
<path d="M1005.0 360.2h-3.200v5.600h5.600v-3.200" stroke="#a8a8a8" stroke-width="1" fill="none"/>
<path d="M1004.4 363.0l3.800-3.800m-2.400 0h2.400v2.400" stroke="#a8a8a8" stroke-width="1" fill="none"/>
<path d="M1013.8 359.9l5.600 5.600m0-5.600l-5.600 5.600" stroke="#d6d6d6" stroke-width="2" fill="none"/>
<rect x="755.80" y="371.20" width="268.20" height="26.40" fill="#262626"/>
<rect x="759.20" y="373.80" width="17.40" height="17.40" fill="#484848" rx="2.5"/>
<g transform="translate(767.90,382.50) scale(0.82)"><path d="M-4.600 1.600a2.700 2.700 0 0 1 -0.300 -5.400a3.600 3.600 0 0 1 6.800 -1.300a3.100 3.100 0 0 1 3.600 3.300a2 2 0 0 1 -0.600 3.400z" fill="#f4f4f4" /><path d="M-1.200 -1.400h2.400v4h2l-3.200 3.800l-3.200 -3.800h2z" fill="#f4f4f4" /><path d="M-1.200 -1.400v4h-2l3.200 3.800l3.200 -3.800h-2v-4" fill="none" stroke="#484848" stroke-width="0.7" stroke-linecap="round" stroke-linejoin="round" /><rect x="-2.6" y="7" width="5.2" height="1.3" fill="#f4f4f4"/></g>
<rect x="779.60" y="373.80" width="17.40" height="17.40" fill="#484848" rx="2.5"/>
<g transform="translate(788.30,382.50) scale(0.82)"><path d="M-6 4.800v-9h4.200l1.400 1.600h5.400v2" fill="none" stroke="#dcdcdc" stroke-width="1.2" stroke-linecap="round" stroke-linejoin="round" /><path d="M-6.400 5.200l2.400 -5.400h10.800l-2.400 5.400z" fill="#dcdcdc" /></g>
<rect x="800.60" y="374.20" width="16.60" height="16.60" fill="#232323" rx="2.5" stroke="#4a4a4a" stroke-width="1"/>
<g transform="translate(808.90,382.50) scale(0.82)"><path d="M-3.400 -3.400l6.800 6.800m0 -6.800l-6.800 6.800" fill="none" stroke="#f0f0f0" stroke-width="1.9" stroke-linecap="round" stroke-linejoin="round" /></g>
<rect x="825.60" y="374.20" width="16.60" height="16.60" fill="#232323" rx="2.5" stroke="#4a4a4a" stroke-width="1"/>
<g transform="translate(833.90,382.50) scale(0.82)"><circle cx="-1.4" cy="-1.4" r="3.7" fill="none" stroke="#ececec" stroke-width="1.3"/><path d="M1.600 1.600l3.800 3.800" fill="none" stroke="#ececec" stroke-width="1.9" stroke-linecap="round" stroke-linejoin="round" /><path d="M-3.300 -1.400h3.800M-1.400 -3.300v3.800" fill="none" stroke="#ececec" stroke-width="1.2" stroke-linecap="round" stroke-linejoin="round" /></g>
<rect x="846.20" y="374.20" width="16.60" height="16.60" fill="#232323" rx="2.5" stroke="#4a4a4a" stroke-width="1"/>
<g transform="translate(854.50,382.50) scale(0.82)"><rect x="-6" y="-5.6" width="12" height="11.2" fill="none" stroke="#d8d8d8" stroke-width="1"/><path d="M-4.600 -4.200h2.800l-2.800 2.800zM4.600 -4.200h-2.800l2.800 2.800zM-4.600 4.200h2.800l-2.800 -2.800zM4.600 4.200h-2.800l2.800 -2.800z" fill="#ececec" /><path d="M-3.600 -3.200l2.400 2.200M3.600 -3.200l-2.400 2.200M-3.600 3.200l2.400 -2.200M3.600 3.200l-2.400 -2.200" fill="none" stroke="#ececec" stroke-width="1.1" stroke-linecap="round" stroke-linejoin="round" /></g>
<rect x="866.60" y="374.20" width="16.60" height="16.60" fill="#232323" rx="2.5" stroke="#4a4a4a" stroke-width="1"/>
<g transform="translate(874.90,382.50) scale(0.82)"><circle cx="-1.4" cy="-1.4" r="3.7" fill="none" stroke="#ececec" stroke-width="1.3"/><path d="M1.600 1.600l3.800 3.800" fill="none" stroke="#ececec" stroke-width="1.9" stroke-linecap="round" stroke-linejoin="round" /><path d="M-3.300 -1.400h3.800" fill="none" stroke="#ececec" stroke-width="1.2" stroke-linecap="round" stroke-linejoin="round" /></g>
<rect x="891.60" y="374.20" width="16.60" height="16.60" fill="#232323" rx="2.5" stroke="#4a4a4a" stroke-width="1"/>
<g transform="translate(899.90,382.50) scale(0.82)"><path d="M-6 6.200l1 -2.800l5.600 -5.600l1.800 1.800l-5.600 5.600z" fill="none" stroke="#ececec" stroke-width="1.2" stroke-linecap="round" stroke-linejoin="round" /><path d="M0.400 -3.800l3.600 3.600" fill="none" stroke="#ececec" stroke-width="1.6" stroke-linecap="round" stroke-linejoin="round" /><g transform="rotate(-45 3.600 -3.600)"><rect x="2" y="-6.6" width="3.4" height="4.6" fill="#ececec" rx="1.2"/></g></g>
<rect x="912.00" y="373.80" width="17.40" height="17.40" fill="#4f9bd8" rx="2.5"/>
<g transform="translate(920.70,382.50) scale(0.82)"><path d="M-3.800 7.200c-1.400 -1.600 -2.600 -3.400 -3.600 -5.200c-0.500 -0.900 0.700 -1.800 1.500 -0.900l1.700 1.900v-7.200c0 -1.100 1.600 -1.100 1.700 0l0.300 4.200l0.200 -5.700c0 -1.200 1.700 -1.200 1.800 0l0.200 5.700l0.700 -5c0.100 -1.100 1.700 -1 1.700 0.200l-0.300 5.400l1.200 -3.500c0.400 -1 1.800 -0.600 1.600 0.500c-0.500 3 -1 5.400 -2 9.600z" fill="#f2f2f2" /></g>
<rect x="937.80" y="374.20" width="16.60" height="16.60" fill="#232323" rx="2.5" stroke="#4a4a4a" stroke-width="1"/>
<g transform="translate(946.10,382.50) scale(0.82)"><path d="M-3.800 -4.800a6 6 0 1 1 -2 3.600" fill="none" stroke="#ececec" stroke-width="1.400"/><path d="M-1 -7.400l-4.600 2.200l4 2.800z" fill="#ececec" /><g transform="rotate(-20)"><rect x="-2.8" y="-2" width="5.6" height="4.4" fill="#ececec"/></g></g>
<rect x="958.20" y="374.20" width="16.60" height="16.60" fill="#232323" rx="2.5" stroke="#4a4a4a" stroke-width="1"/>
<g transform="translate(966.50,382.50) scale(0.82)"><rect x="-4" y="-3.4" width="8" height="6.8" fill="#f4f4f4"/><path d="M-6.400 -3.400v-2.400h2.600M6.400 -3.400v-2.400h-2.600M-6.400 3.400v2.400h2.600M6.400 3.400v2.400h-2.600" fill="none" stroke="#f4f4f4" stroke-width="1.3" stroke-linecap="round" stroke-linejoin="round" /></g>
<rect x="978.60" y="374.20" width="16.60" height="16.60" fill="#232323" rx="2.5" stroke="#4a4a4a" stroke-width="1"/>
<g transform="translate(986.90,382.50) scale(0.82)"><path d="M3.800 -4.800a6 6 0 1 0 2 3.600" fill="none" stroke="#ececec" stroke-width="1.400"/><path d="M1 -7.400l4.600 2.200l-4 2.800z" fill="#ececec" /><g transform="rotate(20)"><rect x="-2.8" y="-2" width="5.6" height="4.4" fill="#ececec"/></g></g>
<rect x="1004.00" y="374.20" width="16.60" height="16.60" fill="#232323" rx="2.5" stroke="#4a4a4a" stroke-width="1"/>
<g transform="translate(1012.30,382.50) scale(0.82)"><rect x="-6" y="-1.4" width="4.6" height="7" fill="#ececec"/><rect x="1.4" y="-1.4" width="4.6" height="7" fill="none" stroke="#ececec" stroke-width="1.1"/><path d="M-3.800 -2.600c0 -5 7.600 -5 7.600 -0.400" fill="none" stroke="#ececec" stroke-width="1.200"/><path d="M2 -3.400h3.600l-1.800 2.400z" fill="#ececec" /><path d="M0 -2v8" fill="none" stroke="#aaa" stroke-width="0.6" stroke-linecap="round" stroke-linejoin="round" /></g>
<line x1="821.00" y1="377.00" x2="821.00" y2="388.00" stroke="#4a4a4a" stroke-width="1"/>
<line x1="887.40" y1="377.00" x2="887.40" y2="388.00" stroke="#4a4a4a" stroke-width="1"/>
<line x1="933.20" y1="377.00" x2="933.20" y2="388.00" stroke="#4a4a4a" stroke-width="1"/>
<line x1="999.40" y1="377.00" x2="999.40" y2="388.00" stroke="#4a4a4a" stroke-width="1"/>
<rect x="755.80" y="395.20" width="268.20" height="3.20" fill="#1e2d3c"/>
<rect x="755.80" y="398.30" width="268.20" height="1.05" fill="#6485a4"/>
<rect x="755.80" y="399.40" width="268.20" height="14.80" fill="url(#gHdr)"/>
<text transform="translate(877.65,410.20) scale(0.86,1)" font-size="9.3" fill="#d2d2d2" text-anchor="middle" font-weight="normal" >Brush Size</text>
<path d="M1005.0 403.6h-3.200v5.600h5.600v-3.200" stroke="#a8a8a8" stroke-width="1" fill="none"/>
<path d="M1004.4 406.4l3.800-3.800m-2.400 0h2.400v2.400" stroke="#a8a8a8" stroke-width="1" fill="none"/>
<path d="M1013.8 403.3l5.600 5.600m0-5.600l-5.600 5.600" stroke="#d6d6d6" stroke-width="2" fill="none"/>
<rect x="756.80" y="414.40" width="253.00" height="101.00" fill="#4c4c4c"/>
<clipPath id="bsClip"><rect x="756" y="414.4" width="268" height="101"/></clipPath><g clip-path="url(#bsClip)">
<rect x="756.60" y="414.60" width="29.20" height="36.60" fill="#5c5c5c"/>
<circle cx="771.2" cy="428.8" r="0.3" fill="#f0f0f0" fill-opacity="0.53"/>
<text transform="translate(771.20,449.20) scale(0.92,1)" font-size="7.4" fill="#e8e8e8" text-anchor="middle" font-weight="normal" >1</text>
<rect x="786.60" y="414.60" width="29.20" height="36.60" fill="#5c5c5c"/>
<circle cx="801.2" cy="428.8" r="0.45" fill="#f0f0f0" fill-opacity="0.62"/>
<text transform="translate(801.20,449.20) scale(0.92,1)" font-size="7.4" fill="#e8e8e8" text-anchor="middle" font-weight="normal" >1.5</text>
<rect x="816.60" y="414.60" width="29.20" height="36.60" fill="#5c5c5c"/>
<circle cx="831.2" cy="428.8" r="0.8" fill="#f0f0f0" fill-opacity="0.83"/>
<text transform="translate(831.20,449.20) scale(0.92,1)" font-size="7.4" fill="#e8e8e8" text-anchor="middle" font-weight="normal" >2</text>
<rect x="846.60" y="414.60" width="29.20" height="36.60" fill="#5c5c5c"/>
<circle cx="861.2" cy="428.8" r="1.2" fill="#f0f0f0"/>
<text transform="translate(861.20,449.20) scale(0.92,1)" font-size="7.4" fill="#e8e8e8" text-anchor="middle" font-weight="normal" >3</text>
<rect x="876.60" y="414.60" width="29.20" height="36.60" fill="#5c5c5c"/>
<circle cx="891.2" cy="428.8" r="1.7" fill="#f0f0f0"/>
<text transform="translate(891.20,449.20) scale(0.92,1)" font-size="7.4" fill="#e8e8e8" text-anchor="middle" font-weight="normal" >4</text>
<rect x="906.60" y="414.60" width="29.20" height="36.60" fill="#5c5c5c"/>
<circle cx="921.2" cy="428.8" r="2.1" fill="#f0f0f0"/>
<text transform="translate(921.20,449.20) scale(0.92,1)" font-size="7.4" fill="#e8e8e8" text-anchor="middle" font-weight="normal" >5</text>
<rect x="936.60" y="414.60" width="29.20" height="36.60" fill="#5c5c5c"/>
<circle cx="951.2" cy="428.8" r="2.9" fill="#f0f0f0"/>
<text transform="translate(951.20,449.20) scale(0.92,1)" font-size="7.4" fill="#e8e8e8" text-anchor="middle" font-weight="normal" >7</text>
<rect x="966.60" y="414.60" width="29.20" height="36.60" fill="#5c5c5c"/>
<circle cx="981.2" cy="428.8" r="3.9" fill="#f0f0f0"/>
<text transform="translate(981.20,449.20) scale(0.92,1)" font-size="7.4" fill="#e8e8e8" text-anchor="middle" font-weight="normal" >10</text>
<rect x="756.60" y="452.10" width="29.20" height="36.60" fill="#5c5c5c"/>
<circle cx="771.2" cy="466.3" r="4.6" fill="#f0f0f0"/>
<text transform="translate(771.20,486.70) scale(0.92,1)" font-size="7.4" fill="#e8e8e8" text-anchor="middle" font-weight="normal" >12</text>
<rect x="786.60" y="452.10" width="29.20" height="36.60" fill="#5c5c5c"/>
<circle cx="801.2" cy="466.3" r="5.7" fill="#f0f0f0"/>
<text transform="translate(801.20,486.70) scale(0.92,1)" font-size="7.4" fill="#e8e8e8" text-anchor="middle" font-weight="normal" >15</text>
<rect x="816.60" y="452.10" width="29.20" height="36.60" fill="#5c5c5c"/>
<circle cx="831.2" cy="466.3" r="7.6" fill="#f0f0f0"/>
<text transform="translate(831.20,486.70) scale(0.92,1)" font-size="7.4" fill="#e8e8e8" text-anchor="middle" font-weight="normal" >20</text>
<rect x="846.60" y="452.10" width="29.20" height="36.60" fill="#5c5c5c"/>
<circle cx="861.2" cy="466.3" r="9.2" fill="#f0f0f0"/>
<text transform="translate(861.20,486.70) scale(0.92,1)" font-size="7.4" fill="#e8e8e8" text-anchor="middle" font-weight="normal" >25</text>
<rect x="876.60" y="452.10" width="29.20" height="36.60" fill="#5c5c5c"/>
<circle cx="891.2" cy="466.3" r="9.2" fill="#f0f0f0"/>
<text transform="translate(891.20,486.70) scale(0.92,1)" font-size="7.4" fill="#e8e8e8" text-anchor="middle" font-weight="normal" >30</text>
<rect x="906.60" y="452.10" width="29.20" height="36.60" fill="#5c5c5c"/>
<circle cx="921.2" cy="466.3" r="9.2" fill="#f0f0f0"/>
<text transform="translate(921.20,486.70) scale(0.92,1)" font-size="7.4" fill="#e8e8e8" text-anchor="middle" font-weight="normal" >40</text>
<rect x="936.60" y="452.10" width="29.20" height="36.60" fill="#5c5c5c"/>
<circle cx="951.2" cy="466.3" r="9.2" fill="#f0f0f0"/>
<text transform="translate(951.20,486.70) scale(0.92,1)" font-size="7.4" fill="#e8e8e8" text-anchor="middle" font-weight="normal" >50</text>
<rect x="966.60" y="452.10" width="29.20" height="36.60" fill="#5c5c5c"/>
<circle cx="981.2" cy="466.3" r="9.2" fill="#f0f0f0"/>
<text transform="translate(981.20,486.70) scale(0.92,1)" font-size="7.4" fill="#e8e8e8" text-anchor="middle" font-weight="normal" >70</text>
<rect x="756.60" y="489.60" width="29.20" height="36.60" fill="#5c5c5c"/>
<circle cx="771.2" cy="503.6" r="9.2" fill="#f0f0f0"/>
<text transform="translate(771.20,524.20) scale(0.92,1)" font-size="7.4" fill="#e8e8e8" text-anchor="middle" font-weight="normal" >100</text>
<rect x="786.60" y="489.60" width="29.20" height="36.60" fill="#5c5c5c"/>
<circle cx="801.2" cy="503.6" r="9.2" fill="#f0f0f0"/>
<text transform="translate(801.20,524.20) scale(0.92,1)" font-size="7.4" fill="#e8e8e8" text-anchor="middle" font-weight="normal" >150</text>
<rect x="816.60" y="489.60" width="29.20" height="36.60" fill="#5c5c5c"/>
<circle cx="831.2" cy="503.6" r="9.2" fill="#f0f0f0"/>
<text transform="translate(831.20,524.20) scale(0.92,1)" font-size="7.4" fill="#e8e8e8" text-anchor="middle" font-weight="normal" >200</text>
<rect x="846.60" y="489.60" width="29.20" height="36.60" fill="#5c5c5c"/>
<circle cx="861.2" cy="503.6" r="9.2" fill="#f0f0f0"/>
<text transform="translate(861.20,524.20) scale(0.92,1)" font-size="7.4" fill="#e8e8e8" text-anchor="middle" font-weight="normal" >300</text>
<rect x="876.60" y="489.60" width="29.20" height="36.60" fill="#5c5c5c"/>
<circle cx="891.2" cy="503.6" r="9.2" fill="#f0f0f0"/>
<text transform="translate(891.20,524.20) scale(0.92,1)" font-size="7.4" fill="#e8e8e8" text-anchor="middle" font-weight="normal" >400</text>
<rect x="906.60" y="489.60" width="29.20" height="36.60" fill="#5c5c5c"/>
<circle cx="921.2" cy="503.6" r="9.2" fill="#f0f0f0"/>
<text transform="translate(921.20,524.20) scale(0.92,1)" font-size="7.4" fill="#e8e8e8" text-anchor="middle" font-weight="normal" >500</text>
<rect x="936.60" y="489.60" width="29.20" height="36.60" fill="#5c5c5c"/>
<circle cx="951.2" cy="503.6" r="9.2" fill="#f0f0f0"/>
<text transform="translate(951.20,524.20) scale(0.92,1)" font-size="7.4" fill="#e8e8e8" text-anchor="middle" font-weight="normal" >700</text>
<rect x="966.60" y="489.60" width="29.20" height="36.60" fill="#5c5c5c"/>
<circle cx="981.2" cy="503.6" r="9.2" fill="#f0f0f0"/>
<text transform="translate(981.20,524.20) scale(0.92,1)" font-size="7.4" fill="#e8e8e8" text-anchor="middle" font-weight="normal" >1000</text>
</g>
<rect x="1008.60" y="414.40" width="15.40" height="101.00" fill="url(#gTrackV)"/>
<path d="M1013.5 420.0h5.600l-2.800-4.600z" fill="#a4a4a4"/>
<path d="M1013.5 509.8h5.600l-2.800 4.600z" fill="#a4a4a4"/>
<rect x="1009.80" y="422.00" width="13.80" height="74.00" fill="url(#gThumbV)" rx="3.5"/>
<rect x="0.00" y="515.40" width="1024.00" height="14.60" fill="#262626"/>
<rect x="0.00" y="513.40" width="756.00" height="2.00" fill="#262626"/>
<rect x="177.50" y="513.50" width="575.00" height="0.90" fill="#454545"/>
</svg>
</body></html>
